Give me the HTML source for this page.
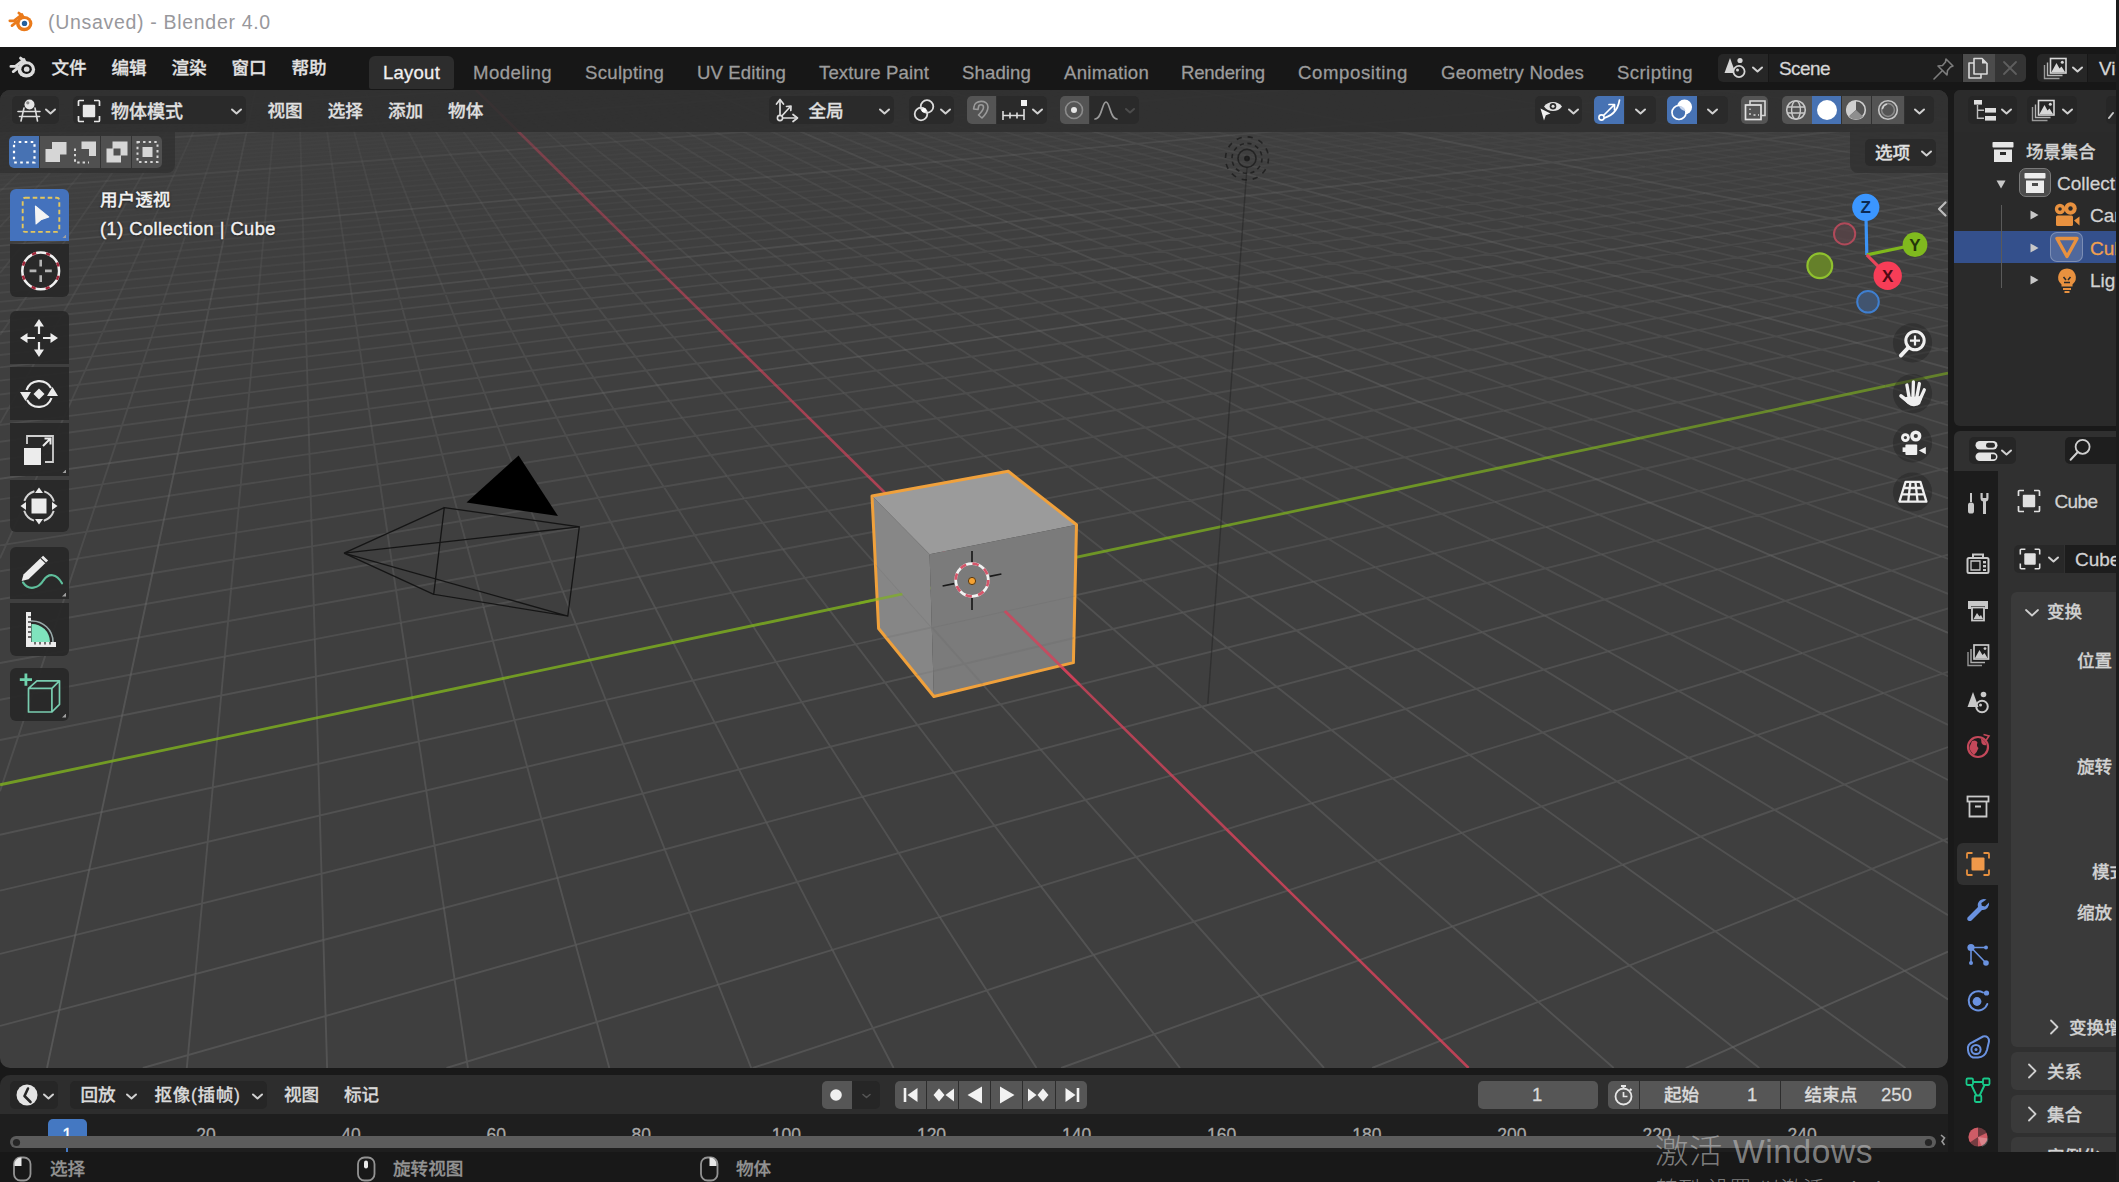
<!DOCTYPE html>
<html lang="zh"><head><meta charset="utf-8"><title>Blender</title>
<style>
*{box-sizing:border-box;margin:0;padding:0}
html,body{width:2119px;height:1182px;overflow:hidden;background:#191919}
body{font-family:"Liberation Sans","Noto Sans CJK SC",sans-serif;color:#e3e3e3;font-size:18px}
#root{position:relative;width:2119px;height:1182px;overflow:hidden;background:#191919}
.a{position:absolute}
.t{position:absolute;white-space:nowrap;line-height:1;transform:translateY(-50%);font-weight:500;-webkit-text-stroke:.28px}
svg{display:block}

</style></head>
<body>
<div id="root">
<svg class="vp" width="1948" height="978" viewBox="0 90 1948 978" style="position:absolute;left:0;top:90px" fill="none" stroke-linecap="butt">
<rect x="0" y="90" width="1948" height="978" fill="#3f3f3f"/>
<g id="grid"><path d="M1607.5 90L1621.4 91.9M1634.4 90L1674.9 95.4M1661.5 90L1730.8 99.1M1688.7 90L1789.2 102.9M1743.4 90L1866.8 105.3M1771 90L1930.7 109.4M1798.6 90L1948 107.8M1826.4 90L1948 104.3M1854.3 90L1948 100.8M1882.3 90L1948 97.4M1910.4 90L1948 94.2M1938.6 90L1948 91M-0 107L20.8 105.8M0 109.4L162.8 99.8M0 111.8L254.1 96.6M0 114.2L387.4 90.9M0 116.7L440 90M-0 121.9L515.9 90M0 124.6L554.2 90M0 127.4L592.7 90M0 130.3L631.5 90M0 133.2L670.5 90M0 136.2L709.8 90M0 139.3L749.4 90M0 142.5L789.2 90M0 145.8L829.2 90M13 151.8L910.2 90M188.3 143.1L951 90M355 134.9L992.1 90M513.8 127.1L1033.5 90M617 123.1L1075.2 90M764.3 115.8L1117.1 90M861.4 112.1L1159.4 90M956.4 108.4L1201.9 90M1049.5 104.8L1244.7 90M1230 97.9L1331.2 90M1317.5 94.5L1374.8 90M1367.7 94.1L1418.8 90M1453.2 90.8L1463.1 90" stroke="#5e5e5e" stroke-opacity="0.03" stroke-width="1.9"/>
<path d="M1165.3 90L1175.1 92M1215.8 90L1236.2 94M1241.2 90L1280.6 97.5M1266.7 90L1326.9 101.1M1292.3 90L1375.2 104.9M1317.9 90L1425.7 108.9M1343.7 90L1478.5 113.1M1369.6 90L1497.5 111.4M1395.6 90L1552.9 115.6M1421.7 90L1611 120.1M1474.3 90L1735.9 129.8M1500.7 90L1754.8 127.8M1527.2 90L1822.1 132.9M1553.9 90L1892.9 138.3M1580.6 90L1948 141.3M1621.4 91.9L1948 136.6M1674.9 95.4L1948 132M1730.8 99.1L1948 127.6M1789.2 102.9L1948 123.4M1866.8 105.3L1948 115.4M1930.7 109.4L1948 111.5M0 152.6L13 151.8M0 156.2L188.3 143.1M0 159.9L355 134.9M0 163.7L513.8 127.1M0 167.6L617 123.1M0 171.7L764.3 115.8M0 175.9L861.4 112.1M0 180.2L956.4 108.4M42.1 181.5L1049.5 104.8M423.7 160.9L1230 97.9M543.1 155.9L1317.5 94.5M713.2 146.8L1367.7 94.1M824.5 142.1L1453.2 90.8M933.2 137.6L1507.7 90M1039.3 133.2L1552.5 90M1142.9 128.9L1597.7 90M1244.2 124.7L1643.2 90M1343.1 120.6L1689.1 90M1496.3 116.1L1781.7 90M1590.4 112.2L1828.5 90M1646.6 111.7L1875.6 90M1738.1 107.9L1923.1 90M1794.1 107.4L1948 92.3M1883.2 103.6L1948 97.1" stroke="#5e5e5e" stroke-opacity="0.07" stroke-width="1.9"/>
<path d="M1.3 90L0 90.8M22.1 90L20.5 91M967.4 90L981.4 93.7M991.8 90L1019.6 97.1M1016.3 90L1059.3 100.7M1040.9 90L1100.8 104.4M1065.6 90L1144.2 108.3M1090.4 90L1189.4 112.3M1115.3 90L1236.8 116.6M1140.3 90L1257.3 114.8M1175.1 92L1307.1 119.2M1236.2 94L1413.9 128.6M1280.6 97.5L1471.3 133.6M1326.9 101.1L1531.7 138.9M1375.2 104.9L1552.6 136.8M1425.7 108.9L1616.3 142.3M1478.5 113.1L1683.4 148.1M1497.5 111.4L1754.2 154.2M1552.9 115.6L1829.1 160.7M1611 120.1L1849.8 158.2M1735.9 129.8L1948 162.1M1754.8 127.8L1948 156.6M1822.1 132.9L1948 151.3M1892.9 138.3L1948 146.2M0 184.7L42.1 181.5M0 194.1L423.7 160.9M0 199L543.1 155.9M0 204.1L713.2 146.8M0 209.4L824.5 142.1M233 195.6L933.2 137.6M435.6 184L1039.3 133.2M565.7 178.3L1142.9 128.9M750.2 167.6L1244.2 124.7M870.7 162.3L1343.1 120.6M1102.5 152.1L1496.3 116.1M1214.1 147.2L1590.4 112.2M1276.9 146.8L1646.6 111.7M1385.1 142L1738.1 107.9M1490.6 137.3L1794.1 107.4M1552.6 136.8L1883.2 103.6M1654.9 132.3L1948 102.2M1754.8 127.8L1948 107.6M1816 127.4L1948 113.3" stroke="#5e5e5e" stroke-opacity="0.10" stroke-width="1.9"/>
<path d="M20.5 91L13.9 95.4M63.8 90L60.2 92.8M84.8 90L83.1 91.5M105.9 90L101.1 94.6M127 90L124 93.3M148.3 90L146.6 92M169.6 90L169.1 90.7M190.9 90L188.7 93.8M212.4 90L211.3 92.5M233.9 90L233.5 91.2M299 90L299.1 91.7M320.9 90L320.9 90.4M386.9 90L387.4 90.9M799.2 90L810.5 94M823 90L844.8 97.4M846.8 90L880.4 100.9M870.8 90L917.6 104.6M894.8 90L956.4 108.4M918.9 90L996.9 112.4M981.4 93.7L1083.6 121M1019.6 97.1L1105.3 119.2M1059.3 100.7L1151.9 123.7M1100.8 104.4L1200.8 128.5M1144.2 108.3L1252.1 133.4M1189.4 112.3L1306 138.6M1236.8 116.6L1362.8 144.1M1257.3 114.8L1422.5 149.9M1307.1 119.2L1445 147.6M1413.9 128.6L1574.9 160M1471.3 133.6L1645.5 166.7M1531.7 138.9L1720.2 173.8M1552.6 136.8L1742.7 171.1M1616.3 142.3L1822.1 178.4M1683.4 148.1L1906.4 186.3M1754.2 154.2L1948 186.6M1829.1 160.7L1948 180.1M1849.8 158.2L1948 173.8M0 215L233 195.6M0 220.7L435.6 184M0 226.6L565.7 178.3M0 232.8L750.2 167.6M302.5 212.5L870.7 162.3M652 193.3L1102.5 152.1M784.8 187.1L1214.1 147.2M913.9 181.2L1276.9 146.8M1039.4 175.4L1385.1 142M1161.4 169.7L1490.6 137.3M1280.1 164.2L1552.6 136.8M1395.7 158.9L1654.9 132.3M1462.6 158.4L1754.8 127.8M1574.4 153.2L1816 127.4M1749.3 147.7L1948 125.4M1854.8 142.7L1948 132M1920.3 142.2L1948 139" stroke="#5e5e5e" stroke-opacity="0.14" stroke-width="1.9"/>
<path d="M13.9 95.4L0 104.6M60.2 92.8L42.2 106.9M83.1 91.5L66.9 105.4M101.1 94.6L91.3 104M124 93.3L115.4 102.6M146.6 92L139.2 101.2M169.1 90.7L166 95.1M681.9 90L685.3 91.6M728.6 90L748.5 98.2M752 90L782 101.8M775.6 90L817 105.4M810.5 94L853.5 109.3M844.8 97.4L891.6 113.3M880.4 100.9L931.4 117.5M917.6 104.6L973.1 121.9M956.4 108.4L1016.7 126.4M996.9 112.4L1062.4 131.3M1083.6 121L1160.9 141.6M1105.3 119.2L1214.1 147.2M1151.9 123.7L1237.5 145M1200.8 128.5L1293.7 150.8M1252.1 133.4L1353 156.9M1306 138.6L1415.5 163.3M1362.8 144.1L1481.8 170.1M1422.5 149.9L1551.9 177.4M1445 147.6L1575.9 174.6M1574.9 160L1729.7 190.1M1645.5 166.7L1814.1 198.6M1720.2 173.8L1837.8 195.5M1742.7 171.1L1927.8 204.4M1822.1 178.4L1948 200.5M1906.4 186.3L1948 193.4M0 239.2L302.5 212.5M60.7 247.4L652 193.3M303.1 232L784.8 187.1M529.1 217.6L913.9 181.2M674 210.6L1039.4 175.4M877.3 197.7L1161.4 169.7M1010.4 191.3L1280.1 164.2M1139.6 185.1L1395.7 158.9M1211.5 184.7L1462.6 158.4M1336.3 178.7L1574.4 153.2M1528.3 172.4L1749.3 147.7M1645.5 166.7L1854.8 142.7M1715.9 166.2L1920.3 142.2M1829.1 160.7L1948 146.4M1899.1 160.2L1948 154.2" stroke="#5e5e5e" stroke-opacity="0.17" stroke-width="1.9"/>
<path d="M42.2 106.9L0 139.8M66.9 105.4L17.3 148M91.3 104L47.3 146M115.4 102.6L76.9 143.9M139.2 101.2L106.1 142M166 95.1L135 140M188.7 93.8L163.4 138.1M211.3 92.5L191.5 136.1M233.5 91.2L219.2 134.3M277.2 90L273.5 130.6M299.1 91.7L300.1 128.8M320.9 90.4L326.4 127M342.8 90L352.4 125.2M364.8 90L378 123.4M387.4 90.9L403.4 121.7M409.1 90L428.4 120M431.4 90L453.1 118.3M453.7 90L477.5 116.7M498.7 90L525.4 113.4M521.3 90L548.9 111.8M543.9 90L572.1 110.2M566.7 90L595.1 108.7M589.6 90L617.8 107.1M612.5 90L640.2 105.6M635.5 90L662.4 104.1M658.7 90L694.9 107.8M685.3 91.6L717.1 106.3M748.5 98.2L787 114.1M782 101.8L824.3 118.3M817 105.4L863.3 122.7M853.5 109.3L904.2 127.3M891.6 113.3L947.1 132.1M931.4 117.5L992.1 137.2M973.1 121.9L1039.3 142.5M1016.7 126.4L1089.1 148.1M1062.4 131.3L1141.4 154M1160.9 141.6L1221.5 157.8M1214.1 147.2L1280.1 164.2M1237.5 145L1342.1 171M1293.7 150.8L1407.8 178.2M1353 156.9L1477.5 185.9M1415.5 163.3L1502.7 183M1481.8 170.1L1577 191M1551.9 177.4L1656 199.5M1575.9 174.6L1740.4 208.5M1729.7 190.1L1855.5 214.6M1814.1 198.6L1948 224M1837.8 195.5L1948 215.8M1927.8 204.4L1948 208M0 252.9L60.7 247.4M0 260.2L303.1 232M0 267.8L529.1 217.6M220.5 254.5L674 210.6M463.8 238.4L877.3 197.7M690.2 223.4L1010.4 191.3M836.3 216.2L1139.6 185.1M977.9 209.1L1211.5 184.7M1115.2 202.3L1336.3 178.7M1323.6 195.3L1528.3 172.4M1451.9 188.8L1645.5 166.7M1576.4 182.6L1715.9 166.2M1650.5 182.1L1829.1 160.7M1770.6 176.1L1899.1 160.2M1844.2 175.6L1948 162.5" stroke="#5e5e5e" stroke-opacity="0.21" stroke-width="1.9"/>
<path d="M17.3 148L0 162.9M47.3 146L0 191.2M76.9 143.9L27.9 196.8M106.1 142L64 193.9M135 140L106.5 181.1M163.4 138.1L140.2 178.5M191.5 136.1L173.4 175.9M219.2 134.3L206.1 173.4M273.5 130.6L270 168.5M300.1 128.8L301.2 166.1M326.4 127L331.9 163.7M352.4 125.2L362.2 161.4M378 123.4L392.1 159.1M403.4 121.7L421.5 156.8M428.4 120L450.5 154.5M453.1 118.3L479.1 152.3M477.5 116.7L507.3 150.2M525.4 113.4L562.4 145.9M548.9 111.8L599.1 151.5M572.1 110.2L626.5 149.3M595.1 108.7L653.6 147.2M617.8 107.1L680.2 145.1M640.2 105.6L706.5 143M662.4 104.1L732.4 140.9M694.9 107.8L758 138.9M717.1 106.3L783.2 136.9M787 114.1L849.7 140.1M824.3 118.3L874.6 138M863.3 122.7L899.1 136M904.2 127.3L943.5 141.3M947.1 132.1L990.2 146.8M992.1 137.2L1039.3 152.5M1039.3 142.5L1091.2 158.6M1089.1 148.1L1145.9 165.1M1141.4 154L1203.8 171.9M1221.5 157.8L1291.2 176.3M1280.1 164.2L1356.4 183.8M1342.1 171L1425.8 191.8M1407.8 178.2L1499.6 200.3M1477.5 185.9L1578.2 209.3M1502.7 183L1604.7 206M1577 191L1688.8 215.4M1656 199.5L1778.9 225.6M1740.4 208.5L1875.6 236.4M1855.5 214.6L1948 232.7M0 275.7L220.5 254.5M0 284.1L463.8 238.4M216.9 271L690.2 223.4M471.6 253.5L836.3 216.2M707.8 237.4L977.9 209.1M860.1 229.6L1115.2 202.3M1150 214.7L1323.6 195.3M1288.1 207.6L1451.9 188.8M1366.6 207.2L1576.4 182.6M1499.6 200.3L1650.5 182.1M1577.6 199.9L1770.6 176.1M1705.6 193.2L1844.2 175.6M1829.7 186.7L1948 171.3M1906.4 186.3L1948 180.7" stroke="#5e5e5e" stroke-opacity="0.24" stroke-width="1.9"/>
<path d="M27.9 196.8L0 226.8M64 193.9L23.6 243.8M106.5 181.1L65.7 240M140.2 178.5L107.1 236.3M173.4 175.9L147.7 232.7M206.1 173.4L187.5 229.1M270 168.5L266.2 209.7M301.2 166.1L302.4 206.5M331.9 163.7L337.9 203.4M362.2 161.4L372.9 200.4M392.1 159.1L407.2 197.4M421.5 156.8L441 194.5M450.5 154.5L474.3 191.6M479.1 152.3L515.3 199.6M507.3 150.2L548.6 196.6M562.4 145.9L613.6 190.8M599.1 151.5L645.3 188M626.5 149.3L676.4 185.2M653.6 147.2L707.1 182.4M680.2 145.1L737.2 179.7M706.5 143L766.9 177M732.4 140.9L796.1 174.4M758 138.9L844.6 181.6M783.2 136.9L873.8 178.9M849.7 140.1L930.8 173.6M874.6 138L958.6 171M899.1 136L1011.7 178M943.5 141.3L1039.4 175.4M990.2 146.8L1066.7 172.7M1039.3 152.5L1093.5 170.1M1091.2 158.6L1150.8 177.2M1145.9 165.1L1211.5 184.7M1203.8 171.9L1276 192.6M1291.2 176.3L1372.2 197.9M1356.4 183.8L1445.6 206.8M1425.8 191.8L1523.9 216.2M1499.6 200.3L1607.7 226.3M1578.2 209.3L1635.3 222.6M1604.7 206L1725.3 233.2M1688.8 215.4L1822 244.6M1778.9 225.6L1926.2 256.8M1875.6 236.4L1948 251.3M0 292.8L216.9 271M24.7 299.4L471.6 253.5M304.4 279.6L707.8 237.4M562.5 261.4L860.1 229.6M955.9 236.4L1150 214.7M1105.3 228.5L1288.1 207.6M1187.9 228.1L1366.6 207.2M1331.4 220.5L1499.6 200.3M1470.2 213.1L1577.6 199.9M1551.3 212.7L1705.6 193.2M1684.8 205.6L1829.7 186.7M1765.4 205.2L1906.4 186.3M1846.4 204.8L1948 190.7M1915.3 217.8L1948 213" stroke="#5e5e5e" stroke-opacity="0.28" stroke-width="1.9"/>
<path d="M23.6 243.8L0 272.9M65.7 240L31.4 289.6M107.1 236.3L79.3 284.8M147.7 232.7L126.2 280.1M187.5 229.1L172 275.5M266.2 209.7L260.9 266.6M302.4 206.5L304 262.2M337.9 203.4L346.1 258M372.9 200.4L387.4 253.9M407.2 197.4L427.9 249.8M441 194.5L467.6 245.8M474.3 191.6L506.5 241.9M515.3 199.6L544.7 238.1M548.6 196.6L582.1 234.3M613.6 190.8L654.8 227M645.3 188L690.2 223.4M676.4 185.2L724.9 220M707.1 182.4L779.2 229.9M737.2 179.7L813.9 226.3M766.9 177L848 222.7M796.1 174.4L881.4 219.2M844.6 181.6L914.1 215.8M873.8 178.9L946.3 212.4M930.8 173.6L1039.5 218.5M958.6 171L1071 215M1011.7 178L1101.9 211.7M1039.4 175.4L1168.5 221.3M1066.7 172.7L1199.3 217.7M1093.5 170.1L1229.4 214.3M1150.8 177.2L1301.4 224.1M1211.5 184.7L1331.4 220.5M1276 192.6L1408.8 230.8M1372.2 197.9L1467.5 223.4M1445.6 206.8L1551 233.9M1523.9 216.2L1640.7 245.2M1607.7 226.3L1669.5 241.1M1635.3 222.6L1766.1 253.1M1725.3 233.2L1870.4 265.9M1822 244.6L1898.6 261.3M1926.2 256.8L1948 261.4M0 301.9L24.7 299.4M0 311.5L304.4 279.6M211 299L562.5 261.4M658.4 269.6L955.9 236.4M899.9 252L1105.3 228.5M1056.7 243.5L1187.9 228.1M1208.1 235.3L1331.4 220.5M1293.1 235L1470.2 213.1M1438.4 227L1551.3 212.7M1522.9 226.7L1684.8 205.6M1551 233.9L1765.4 205.2M1580.4 241.5L1846.4 204.8M1702.6 249.1L1915.3 217.8M1794.4 248.8L1948 225.4M1831.5 257.1L1948 238.8M1870.4 265.9L1948 253.3" stroke="#5e5e5e" stroke-opacity="0.31" stroke-width="1.9"/>
<path d="M31.4 289.6L0 335M79.3 284.8L41.9 350.2M126.2 280.1L97.3 343.9M172 275.5L151.3 337.7M260.9 266.6L255.4 325.8M304 262.2L305.6 320M346.1 258L354.6 314.4M387.4 253.9L402.5 308.9M427.9 249.8L449.2 303.6M467.6 245.8L494.9 298.4M506.5 241.9L539.5 293.2M544.7 238.1L583.1 288.3M582.1 234.3L625.8 283.4M654.8 227L708.3 273.9M690.2 223.4L748.3 269.3M724.9 220L787.4 264.9M779.2 229.9L852.4 278.1M813.9 226.3L891.5 273.4M848 222.7L929.7 268.8M881.4 219.2L967.1 264.3M914.1 215.8L1003.7 259.9M946.3 212.4L1076.8 272.9M1039.5 218.5L1148.9 263.7M1071 215L1183.8 259.3M1101.9 211.7L1264.5 272.3M1168.5 221.3L1299.1 267.7M1199.3 217.7L1386.8 281.4M1229.4 214.3L1421 276.5M1301.4 224.1L1516.4 291M1331.4 220.5L1550.1 285.9M1408.8 230.8L1654 301.3M1467.5 223.4L1800.3 312.1M1551 233.9L1924 329.9M1640.7 245.2L1948 321.7M1669.5 241.1L1948 308.1M1766.1 253.1L1948 295.4M1870.4 265.9L1948 283.4M1898.6 261.3L1948 272.1M0 321.5L211 299M0 343.2L658.4 269.6M-0 355L97.3 343.9M667.5 278.6L899.9 252M838.7 269.1L1056.7 243.5M929.7 268.8L1208.1 235.3M1021.2 268.5L1293.1 235M1113.3 268.2L1438.4 227M1205.9 268L1522.9 226.7M1299.1 267.7L1551 233.9M1324.8 276.8L1580.4 241.5M1450.6 286.1L1702.6 249.1M1550.1 285.9L1794.4 248.8M1584.1 296.1L1831.5 257.1M1687.1 295.8L1870.4 265.9M1726 306.6L1948 269M1832.7 306.4L1948 286.1M1877 317.8L1948 304.8M1924 329.9L1948 325.3" stroke="#5e5e5e" stroke-opacity="0.34" stroke-width="1.9"/>
<path d="M41.9 350.2L0 423.3M97.3 343.9L71.7 400.2M151.3 337.7L133 392.4M255.4 325.8L250.6 377.5M305.6 320L307.1 370.4M354.6 314.4L362 363.4M402.5 308.9L415.5 356.6M449.2 303.6L467.5 350M494.9 298.4L518.3 343.6M539.5 293.2L567.8 337.3M583.1 288.3L616 331.2M625.8 283.4L663.1 325.3M708.3 273.9L780.5 337.2M748.3 269.3L826.4 331M787.4 264.9L871.1 325M852.4 278.1L914.8 319.2M891.5 273.4L957.4 313.5M929.7 268.8L1039.7 330.8M967.1 264.3L1082.1 324.8M1003.7 259.9L1123.5 318.9M1076.8 272.9L1163.8 313.1M1148.9 263.7L1296.1 324.5M1183.8 259.3L1397.6 343.1M1264.5 272.3L1437 336.7M1299.1 267.7L1475.5 330.4M1386.8 281.4L1587.7 349.6M1421 276.5L1711.3 370.8M1516.4 291L1749.2 363.5M1550.1 285.9L1885.7 386.2M1654 301.3L1948 385.8M1800.3 312.1L1948 351.5M1924 329.9L1948 336.1M97.3 343.9L667.5 278.6M0 367.4L838.7 269.1M0 380.6L929.7 268.8M0 394.5L1021.2 268.5M0 409.3L1113.3 268.2M0 425L64.3 416.6M720.8 331.1L1205.9 268M914.8 319.2L1299.1 267.7M1018.8 319L1324.8 276.8M1228.9 318.7L1450.6 286.1M1256.1 330.6L1550.1 285.9M1365.4 330.5L1584.1 296.1M1475.5 330.4L1687.1 295.8M1511.1 343L1726 306.6M1548.9 356.5L1832.7 306.4M1667.1 356.4L1877 317.8M1711.3 370.8L1924 329.9M1834.3 370.8L1948 348M1940.7 402.7L1948 401.1" stroke="#5e5e5e" stroke-opacity="0.38" stroke-width="1.9"/>
<path d="M71.7 400.2L17.9 518.8M133 392.4L94.8 507.1M250.6 377.5L244.5 444M307.1 370.4L308.9 434.9M362 363.4L371.4 426M415.5 356.6L432 417.3M467.5 350L490.8 409M518.3 343.6L547.9 400.8M567.8 337.3L603.4 392.9M616 331.2L682.3 417.8M663.1 325.3L737.9 409.4M780.5 337.2L844.3 393.2M826.4 331L895.3 385.4M871.1 325L944.8 377.9M914.8 319.2L1039.8 401.5M957.4 313.5L1089.1 393.4M1039.7 330.8L1136.9 385.6M1082.1 324.8L1183.4 378M1123.5 318.9L1291.9 401.8M1163.8 313.1L1337.9 393.7M1296.1 324.5L1504.3 410.6M1397.6 343.1L1640 438.2M1437 336.7L1684.2 428.8M1475.5 330.4L1836.5 458.7M1587.7 349.6L1948 471.9M1711.3 370.8L1948 447.7M1749.2 363.5L1948 425.4M1885.7 386.2L1948 404.8M64.3 416.6L720.8 331.1M0 441.8L914.8 319.2M0 459.7L1018.8 319M-0 499.4L173.7 473.9M669.4 401L1228.9 318.7M895.3 385.4L1256.1 330.6M1015.6 385.5L1365.4 330.5M1136.9 385.6L1475.5 330.4M1259.2 385.7L1511.1 343M1291.9 401.8L1548.9 356.5M1419.5 402L1667.1 356.4M1459.1 419.3L1711.3 370.8M1592.5 419.5L1834.3 370.8M1779.8 438.5L1940.7 402.7M1836.5 458.7L1948 432.4M1897.7 480.4L1948 467.9" stroke="#5e5e5e" stroke-opacity="0.41" stroke-width="1.9"/>
<path d="M17.9 518.8L0 558.3M94.8 507.1L77.6 558.5M244.5 444L236.3 532.6M308.9 434.9L311.4 520.4M371.4 426L383.8 508.5M432 417.3L453.7 497.1M490.8 409L521.3 486.1M547.9 400.8L586.6 475.4M603.4 392.9L649.8 465.1M682.3 417.8L744 498.4M737.9 409.4L807.3 487.3M844.3 393.2L927.4 466.1M895.3 385.4L984.6 456M944.8 377.9L1098.8 488.5M1039.8 401.5L1155.5 477.6M1089.1 393.4L1210.3 467.1M1136.9 385.6L1341.9 501.2M1183.4 378L1395.9 489.8M1291.9 401.8L1448.1 478.7M1337.9 393.7L1598.9 514.6M1504.3 410.6L1821.8 541.8M1640 438.2L1871 528.7M1684.2 428.8L1918.4 516.1M1836.5 458.7L1948 498.3M173.7 473.9L669.4 401M0 521.5L895.3 385.4M0 545.4L1015.6 385.5M0 571.2L1136.9 385.6M726.8 476L1259.2 385.7M868.4 476.5L1291.9 401.8M1011.2 477.1L1419.5 402M1155.5 477.6L1459.1 419.3M1301.1 478.2L1592.5 419.5M1495.1 501.9L1779.8 438.5M1649.9 502.6L1836.5 458.7M1707.7 527.8L1897.7 480.4M1871 528.7L1948 508.3" stroke="#5e5e5e" stroke-opacity="0.45" stroke-width="1.9"/>
<path d="M236.3 532.6L231.1 588.9M311.4 520.4L312.9 574.5M383.8 508.5L391.6 560.6M453.7 497.1L467.4 547.2M521.3 486.1L540.4 534.4M586.6 475.4L639.1 576.8M649.8 465.1L712.4 562.8M744 498.4L782.9 549.2M807.3 487.3L850.8 536.2M927.4 466.1L1040.2 565M984.6 456L1105.1 551.2M1098.8 488.5L1167.7 538M1155.5 477.6L1227.9 525.3M1210.3 467.1L1375.1 567.2M1341.9 501.2L1434.3 553.3M1395.9 489.8L1491.3 539.9M1448.1 478.7L1546.1 527M1598.9 514.6L1717.6 569.5M152.5 573.3L726.8 476M312.9 574.5L868.4 476.5M624.3 548.2L1011.2 477.1M782.9 549.2L1155.5 477.6M943.1 550.2L1301.1 478.2M1268.8 552.2L1495.1 501.9M1434.3 553.3L1649.9 502.6M1601.6 554.3L1707.7 527.8" stroke="#5e5e5e" stroke-opacity="0.48" stroke-width="1.9"/>
<path d="M77.6 558.5L57.3 619.6M1871 528.7L1948 558.9M1918.4 516.1L1948 527.2M0 599.2L152.5 573.3M1770.7 555.4L1871 528.7M1941.7 556.4L1948 554.7" stroke="#616161" stroke-opacity="0.45" stroke-width="1.9"/>
<path d="M57.3 619.6L2.3 784.3M231.1 588.9L224.8 656.5M312.9 574.5L314.8 639.2M391.6 560.6L400.9 622.6M467.4 547.2L483.6 606.7M540.4 534.4L562.9 591.5M712.4 562.8L752.8 625.7M782.9 549.2L829.1 609.6M850.8 536.2L902.3 594.1M1105.1 551.2L1182.7 612.5M1167.7 538L1249.5 596.8M1227.9 525.3L1313.6 581.7M1375.1 567.2L1482 632.1M1434.3 553.3L1544.6 615.5M1491.3 539.9L1741.8 671.6M1546.1 527L1948 724.9M1717.6 569.5L1948 676.2M1821.8 541.8L1948 593.9M0 629.7L312.9 574.5M0 663L624.3 548.2M0 699.7L782.9 549.2M0 740L122.1 715.5M655.3 608.1L943.1 550.2M1142.1 580.5L1268.8 552.2M1313.6 581.7L1434.3 553.3M1362.6 614L1601.6 554.3M1544.6 615.5L1770.7 555.4M1608.2 651.3L1941.7 556.4M1802.2 653.1L1948 608.5M1883.5 693.1L1948 671.8" stroke="#616161" stroke-opacity="0.48" stroke-width="1.9"/>
<path d="M2.3 784.3L0 791.2M224.8 656.5L195.5 974M314.8 639.2L323.4 940M400.9 622.6L443.9 908M483.6 606.7L557.4 877.8M562.9 591.5L664.8 849.3M639.1 576.8L766.3 822.3M752.8 625.7L862.5 796.7M829.1 609.6L953.8 772.5M902.3 594.1L1040.5 749.4M1040.2 565L1311.8 803.2M1182.7 612.5L1540 894.7M1249.5 596.8L1622.7 864.8M1313.6 581.7L1904.6 970.8M1482 632.1L1948 915.2M1544.6 615.5L1948 842.8M1741.8 671.6L1948 780M122.1 715.5L655.3 608.1M0 834.7L1142.1 580.5M0 890.7L1313.6 581.7M75.3 935.1L1362.6 614M766.3 822.3L1544.6 615.5M1171.7 775.4L1608.2 651.3M1226.4 829.3L1802.2 653.1M1461.7 832.9L1883.5 693.1M1540 894.7L1948 747.1M1795.8 899.2L1948 838.5" stroke="#616161" stroke-opacity="0.52" stroke-width="1.9"/>
<path d="M664.8 849.3L718.3 984.8M766.3 822.3L832.4 949.9M862.5 796.7L939.7 917.1M953.8 772.5L1040.8 886.1M1040.5 749.4L1260 996M1311.8 803.2L1452.3 926.5M323.4 940L766.3 822.3M575.7 944.9L1171.7 775.4M832.4 949.9L1226.4 829.3M1093.5 955L1461.7 832.9" stroke="#616161" stroke-opacity="0.55" stroke-width="1.9"/>
<path d="M0 953.9L75.3 935.1M0 1025.9L59.3 1010.2" stroke="#646464" stroke-opacity="0.52" stroke-width="1.9"/>
<path d="M195.5 974L186.8 1068M323.4 940L327.1 1068M443.9 908L467.9 1068M557.4 877.8L609.3 1068M718.3 984.8L751.2 1068M832.4 949.9L893.6 1068M939.7 917.1L1036.5 1068M1040.8 886.1L1180 1068M1260 996L1324 1068M1452.3 926.5L1613.7 1068M1540 894.7L1759.3 1068M1622.7 864.8L1905.5 1068M1904.6 970.8L1948 999.4M59.3 1010.2L323.4 940M142.8 1068L575.7 944.9M446.5 1068L832.4 949.9M752.6 1068L1093.5 955M1061.1 1068L1540 894.7M1372.1 1068L1795.8 899.2" stroke="#646464" stroke-opacity="0.55" stroke-width="1.9"/>
<path d="M42.9 90L37.2 94.1M37.2 94.1L110.1 90" stroke="#676767" stroke-opacity="0.17" stroke-width="1.9"/>
<path d="M37.2 94.1L17.3 108.4M0 96.2L37.2 94.1" stroke="#6a6a6a" stroke-opacity="0.17" stroke-width="1.9"/>
<path d="M17.3 108.4L0 120.7M255.5 90L246.5 132.4M705.2 90L739 104.8M943.1 90L961.6 95.1M1190.5 90L1217.5 95.4M1447.9 90L1517.9 100.9M1716 90L1948 119.3M0 119.3L477.8 90M0 149.2L76.9 143.9M548.9 111.8L869.6 90M1217.5 95.4L1287.8 90M1589 103.1L1735.2 90M1912.9 123L1948 119.2" stroke="#6a6a6a" stroke-opacity="0.21" stroke-width="1.9"/>
<path d="M246.5 132.4L238.3 170.9M739 104.8L808.1 134.9M961.6 95.1L1110.5 136.3M1217.5 95.4L1428.8 137.7M1517.9 100.9L1929 164.9M76.9 143.9L548.9 111.8M0 189.3L1217.5 95.4M1229.8 135.4L1589 103.1M1683.4 148.1L1912.9 123" stroke="#6a6a6a" stroke-opacity="0.24" stroke-width="1.9"/>
<path d="M238.3 170.9L229.3 212.9M808.1 134.9L902.5 176.2M1110.5 136.3L1265.1 179.1M1428.8 137.7L1705.6 193.2M1929 164.9L1948 167.8M707.1 182.4L1229.8 135.4M1407.8 178.2L1683.4 148.1M1880.1 211.2L1948 201.5" stroke="#6a6a6a" stroke-opacity="0.28" stroke-width="1.9"/>
<path d="M229.3 212.9L216.9 271M902.5 176.2L1007.4 222M1265.1 179.1L1438.4 227M1705.6 193.2L1948 241.8M0 245.9L707.1 182.4M1071 215L1407.8 178.2M1669.5 241.1L1880.1 211.2" stroke="#6a6a6a" stroke-opacity="0.31" stroke-width="1.9"/>
<path d="M216.9 271L204 331.6M1007.4 222L1113.3 268.2M1438.4 227L1687.1 295.8M0 332.1L1071 215M1421 276.5L1669.5 241.1" stroke="#6a6a6a" stroke-opacity="0.34" stroke-width="1.9"/>
<path d="M204 331.6L192.6 384.9M1113.3 268.2L1256.1 330.6M1687.1 295.8L1948 368M1123.5 318.9L1421 276.5" stroke="#6a6a6a" stroke-opacity="0.38" stroke-width="1.9"/>
<path d="M192.6 384.9L178 453.5M1256.1 330.6L1459.1 419.3M0 478.8L1123.5 318.9" stroke="#6a6a6a" stroke-opacity="0.41" stroke-width="1.9"/>
<path d="M178 453.5L158.4 545.3M1459.1 419.3L1770.7 555.4" stroke="#6a6a6a" stroke-opacity="0.45" stroke-width="1.9"/>
<path d="M158.4 545.3L112.4 761M1770.7 555.4L1948 632.8" stroke="#6a6a6a" stroke-opacity="0.48" stroke-width="1.9"/>
<path d="M112.4 761L59.3 1010.2M1904.6 970.8L1948 951.6" stroke="#6a6a6a" stroke-opacity="0.52" stroke-width="1.9"/>
<path d="M59.3 1010.2L47 1068M1685.7 1068L1904.6 970.8" stroke="#6a6a6a" stroke-opacity="0.55" stroke-width="1.9"/>
<path d="M476.1 90L501.6 115" stroke="#d2435b" stroke-opacity="0.32" stroke-width="2.6"/>
<path d="M501.6 115L535 148" stroke="#d2435b" stroke-opacity="0.37" stroke-width="2.6"/>
<path d="M535 148L581.4 193.7" stroke="#d2435b" stroke-opacity="0.42" stroke-width="2.6"/>
<path d="M581.4 193.7L618.8 230.6" stroke="#d2435b" stroke-opacity="0.48" stroke-width="2.6"/>
<path d="M618.8 230.6L667.5 278.6" stroke="#d2435b" stroke-opacity="0.53" stroke-width="2.6"/>
<path d="M667.5 278.6L733.4 343.5" stroke="#d2435b" stroke-opacity="0.58" stroke-width="2.6"/>
<path d="M733.4 343.5L791.9 401.1" stroke="#d2435b" stroke-opacity="0.64" stroke-width="2.6"/>
<path d="M791.9 401.1L868.4 476.5" stroke="#d2435b" stroke-opacity="0.69" stroke-width="2.6"/>
<path d="M868.4 476.5L972.6 579.2" stroke="#d2435b" stroke-opacity="0.74" stroke-width="2.6"/>
<path d="M972.6 579.2L1226.4 829.3" stroke="#d2435b" stroke-opacity="0.80" stroke-width="2.6"/>
<path d="M1226.4 829.3L1468.6 1068" stroke="#d2435b" stroke-opacity="0.85" stroke-width="2.6"/>
<path d="M1885.7 386.2L1948 373.1" stroke="#7fb31e" stroke-opacity="0.58" stroke-width="2.8"/>
<path d="M1640 438.2L1885.7 386.2" stroke="#7fb31e" stroke-opacity="0.64" stroke-width="2.8"/>
<path d="M1448.1 478.7L1640 438.2" stroke="#7fb31e" stroke-opacity="0.69" stroke-width="2.8"/>
<path d="M972.6 579.2L1448.1 478.7" stroke="#7fb31e" stroke-opacity="0.74" stroke-width="2.8"/>
<path d="M0 784.8L972.6 579.2" stroke="#7fb31e" stroke-opacity="0.80" stroke-width="2.8"/></g>
<path d="M344 553.1L444.3 507.6M344 553.1L579.3 526.8M344 553.1L567.8 616.1M344 553.1L433.7 594.3M444.3 507.6L579.3 526.8L567.8 616.1L433.7 594.3Z" stroke="#111" stroke-width="1.3" stroke-opacity=".9"/>
<polygon points="466.5,502.5 558,516.1 518.6,455.4" fill="#000"/>
<path d="M1247 167.4L1207.8 703.8" stroke="#1c1c1c" stroke-opacity=".4" stroke-width="1.4"/>
<g stroke="#1a1a1a" stroke-opacity=".75" stroke-width="1.6"><circle cx="1247" cy="158.4" r="9"/><circle cx="1247" cy="158.4" r="15" stroke-dasharray="4.2 3.65"/><circle cx="1247" cy="158.4" r="21.5" stroke-dasharray="5.2 6.06"/><circle cx="1247" cy="158.4" r="2.2" fill="#222"/></g>
<polygon points="872,496 1008.2,471.2 1076.5,524.7 929.6,554.3" fill="#9b9b9b"/>
<polygon points="872,496 929.6,554.3 933.9,696.5 878.6,628.5" fill="#878787"/>
<polygon points="929.6,554.3 1076.5,524.7 1073.4,662.6 933.9,696.5" fill="#7b7b7b"/>
<polygon points="872,496 1008.2,471.2 1076.5,524.7 1073.4,662.6 933.9,696.5 878.6,628.5" stroke="#f0a13c" stroke-width="3" stroke-linejoin="round"/>
<clipPath id="lowc"><polygon points="875.4,563.9 931.8,627.3 1074.9,595.4 1073.4,662.6 933.9,696.5 878.6,628.5"/></clipPath>
<g clip-path="url(#lowc)" opacity=".38"><use href="#grid"/></g>
<path d="M1004.8 611L1079.5 684.6" stroke="#d9405a" stroke-opacity=".68" stroke-width="2.8"/>
<path d="M902.3 594.1L858.7 603.3" stroke="#7fb31e" stroke-opacity=".55" stroke-width="2.6"/>
<g><path d="M972 551v12M972 598v12" stroke="#1a1a1a" stroke-width="1.7"/><path d="M942 580h12M990 580h12" stroke="#1a1a1a" stroke-width="1.7" transform="rotate(-11.5 972 580)"/>
<circle cx="972" cy="580" r="16.3" stroke="#f2f2f2" stroke-width="2.7"/><circle cx="972" cy="580" r="16.3" stroke="#d4566a" stroke-width="2.7" stroke-dasharray="6.4 6.4"/>
<circle cx="972" cy="581" r="3.6" fill="#f5a233" stroke="#5a3a10" stroke-width="1"/></g>
</svg>
<div class="a" style="left:0px;top:0px;width:2119px;height:47px;background:#ffffff;"></div>
<svg class="a" style="left:8.2px;top:11px;" width="28" height="24" viewBox="0 0 28 24" fill="none"><path d="M14 3.5 L6 9.8 L1.8 9.8 M4 14.6 L9 10.8" stroke="#ea7a1a" stroke-width="2.7" stroke-linecap="round" stroke-linejoin="round"/><path d="M10.8 2 L15 5.4" stroke="#ea7a1a" stroke-width="2.7" stroke-linecap="round"/><ellipse cx="16.2" cy="12.6" rx="8.2" ry="7.6" fill="#ea7a1a"/><ellipse cx="16.4" cy="12.4" rx="4.8" ry="4.4" fill="#fff"/><ellipse cx="16.5" cy="12.4" rx="2.7" ry="2.6" fill="#26609c"/></svg>
<span class="t" style="left:48px;top:22.5px;font-size:19.5px;color:#98989c;letter-spacing:0.69px;-webkit-text-stroke:0">(Unsaved) - Blender 4.0</span>
<div class="a" style="left:0px;top:47px;width:2116px;height:43px;background:#171717;"></div>
<svg class="a" style="left:8.5px;top:54.5px;" width="30" height="27.5" viewBox="0 0 28 24" fill="none"><path d="M14 3.5 L6 9.8 L1.8 9.8 M4 14.6 L9 10.8" stroke="#dcdcdc" stroke-width="2.7" stroke-linecap="round" stroke-linejoin="round"/><path d="M10.8 2 L15 5.4" stroke="#dcdcdc" stroke-width="2.7" stroke-linecap="round"/><ellipse cx="16.2" cy="12.6" rx="8.2" ry="7.6" fill="#dcdcdc"/><ellipse cx="16.4" cy="12.4" rx="4.9" ry="4.5" fill="#171717"/><ellipse cx="16.5" cy="12.4" rx="2.6" ry="2.5" fill="#dcdcdc"/></svg>
<span class="t " style="left:51.5px;top:68.6px;font-size:17.6px;color:#e2e2e2;">文件</span>
<span class="t " style="left:111.5px;top:68.6px;font-size:17.6px;color:#e2e2e2;">编辑</span>
<span class="t " style="left:171.5px;top:68.6px;font-size:17.6px;color:#e2e2e2;">渲染</span>
<span class="t " style="left:231.5px;top:68.6px;font-size:17.6px;color:#e2e2e2;">窗口</span>
<span class="t " style="left:291.5px;top:68.6px;font-size:17.6px;color:#e2e2e2;">帮助</span>
<div class="a" style="left:369px;top:56px;width:85px;height:32.5px;background:#2d2d2d;border-radius:6px 6px 2px 2px;"></div>
<span class="t" style="left:383px;top:73px;font-size:18.6px;color:#f0f0f0;letter-spacing:0.2px;">Layout</span>
<span class="t" style="left:473px;top:73px;font-size:18.6px;color:#9c9c9c;letter-spacing:0.44px;">Modeling</span>
<span class="t" style="left:585px;top:73px;font-size:18.6px;color:#9c9c9c;letter-spacing:0.28px;">Sculpting</span>
<span class="t" style="left:697px;top:73px;font-size:18.6px;color:#9c9c9c;letter-spacing:0.11px;">UV Editing</span>
<span class="t" style="left:819px;top:73px;font-size:18.6px;color:#9c9c9c;letter-spacing:0.11px;">Texture Paint</span>
<span class="t" style="left:962px;top:73px;font-size:18.6px;color:#9c9c9c;letter-spacing:0.11px;">Shading</span>
<span class="t" style="left:1064px;top:73px;font-size:18.6px;color:#9c9c9c;letter-spacing:0.26px;">Animation</span>
<span class="t" style="left:1181px;top:73px;font-size:18.6px;color:#9c9c9c;letter-spacing:-0.2px;">Rendering</span>
<span class="t" style="left:1298px;top:73px;font-size:18.6px;color:#9c9c9c;letter-spacing:0.6px;">Compositing</span>
<span class="t" style="left:1441px;top:73px;font-size:18.6px;color:#9c9c9c;letter-spacing:0.18px;">Geometry Nodes</span>
<span class="t" style="left:1617px;top:73px;font-size:18.6px;color:#9c9c9c;letter-spacing:0.41px;">Scripting</span>
<div class="a" style="left:1690px;top:47px;width:26px;height:43px;background:linear-gradient(90deg,rgba(23,23,23,0),#171717 70%);"></div>
<div class="a" style="left:1718px;top:54px;width:50px;height:28px;background:#262626;border-radius:5px 0 0 5px;"></div>
<div class="a" style="left:1768.5px;top:54px;width:193.5px;height:28px;background:#1e1e1e;"></div>
<div class="a" style="left:1962.5px;top:54px;width:32.0px;height:28px;background:#4b4b4b;"></div>
<div class="a" style="left:1995px;top:54px;width:31px;height:28px;background:#343434;border-radius:0 5px 5px 0;"></div>
<span class="t" style="left:1779px;top:67.5px;font-size:19px;color:#d6d6d6;letter-spacing:-0.57px;">Scene</span>
<svg class="a" style="left:1722px;top:55px;" width="28" height="26" viewBox="0 0 28 26" fill="none"><path d="M8 3 L13.5 18 L2.5 18 Z" fill="#d5d5d5"/><circle cx="18" cy="5.5" r="2.6" fill="#d5d5d5"/><circle cx="17" cy="16.5" r="5.6" fill="#262626" stroke="#d5d5d5" stroke-width="1.8"/><circle cx="15.5" cy="15" r="1.5" fill="#d5d5d5"/></svg>
<svg class="a" style="left:1750.5px;top:62.5px;" width="13.0" height="13.0" viewBox="0 0 13.0 13.0" fill="none"><path d="M2 4.5 l4.5 4.0 l4.5 -4.0" stroke="#d0d0d0" stroke-width="2" stroke-linecap="round" stroke-linejoin="round"/></svg>
<svg class="a" style="left:1931px;top:56px;" width="26" height="26" viewBox="0 0 26 26" fill="none"><path d="M15 3 L22 10 L19.5 11 L16.5 14.5 L16 19 L7 10 L11.5 9.5 L14.5 6 Z" stroke="#7d7d7d" stroke-width="1.6" stroke-linejoin="round"/><path d="M11.5 14.5 L3 23" stroke="#7d7d7d" stroke-width="1.6" stroke-linecap="round"/></svg>
<svg class="a" style="left:1965px;top:56px;" width="26" height="26" viewBox="0 0 26 26" fill="none"><path d="M9 2.5 h8 l5 5 v10.5 h-13 z" fill="#4b4b4b" stroke="#dadada" stroke-width="1.6" stroke-linejoin="round"/><path d="M17 2.5 v5 h5 z" fill="#dadada"/><path d="M9 7 h-5 v15 h12 v-4" stroke="#dadada" stroke-width="1.6" stroke-linejoin="round"/></svg>
<svg class="a" style="left:2000px;top:58px;" width="20" height="20" viewBox="0 0 20 20" fill="none"><path d="M4 4 L16 16 M16 4 L4 16" stroke="#5e5e5e" stroke-width="1.8" stroke-linecap="round"/></svg>
<div class="a" style="left:2037px;top:54px;width:50px;height:28px;background:#262626;border-radius:5px 0 0 5px;"></div>
<div class="a" style="left:2087.5px;top:54px;width:28.5px;height:28px;background:#1e1e1e;"></div>
<svg class="a" style="left:2041px;top:56px;" width="28" height="26" viewBox="0 0 28 26" fill="none"><path d="M3.5 9 v13.5 h15" stroke="#d8d8d8" stroke-width="1.4" stroke-opacity=".65"/><path d="M6.5 6.5 v13 h15" stroke="#d8d8d8" stroke-width="1.4" stroke-opacity=".8"/><rect x="9.5" y="2.5" width="15.5" height="14.5" fill="#262626" stroke="#d8d8d8" stroke-width="1.6"/><path d="M10.5 16 L15.5 7 L18.5 12.5 L20.5 10.5 L24 16 Z" fill="#d8d8d8"/><circle cx="21.3" cy="6.3" r="1.5" fill="#d8d8d8"/></svg>
<svg class="a" style="left:2070.5px;top:62.5px;" width="13.0" height="13.0" viewBox="0 0 13.0 13.0" fill="none"><path d="M2 4.5 l4.5 4.0 l4.5 -4.0" stroke="#d0d0d0" stroke-width="2" stroke-linecap="round" stroke-linejoin="round"/></svg>
<div class="a" style="left:2087px;top:54px;width:29px;height:28px;overflow:hidden"><span class="t " style="left:12px;top:13.5px;font-size:19px;color:#d6d6d6;">ViewLayer</span></div>
<svg class="a" style="left:0px;top:90px;" width="10" height="10" viewBox="0 0 10 10" fill="none"><path d="M0 0 H10 A10 10 0 0 0 0 10 Z" fill="#191919"/></svg>
<svg class="a" style="left:1938px;top:90px;" width="10" height="10" viewBox="0 0 10 10" fill="none"><path d="M10 0 H0 A10 10 0 0 1 10 10 Z" fill="#191919"/></svg>
<svg class="a" style="left:0px;top:1058px;" width="10" height="10" viewBox="0 0 10 10" fill="none"><path d="M0 10 H10 A10 10 0 0 1 0 0 Z" fill="#191919"/></svg>
<svg class="a" style="left:1938px;top:1058px;" width="10" height="10" viewBox="0 0 10 10" fill="none"><path d="M10 10 H0 A10 10 0 0 0 10 0 Z" fill="#191919"/></svg>
<div class="a" style="left:0px;top:90px;width:1948px;height:42px;background:rgba(46,46,46,.86);border-radius:10px 10px 0 0;"></div>
<div class="a" style="left:0px;top:132px;width:175px;height:41px;background:rgba(50,50,50,.88);border-radius:0 0 8px 0;"></div>
<div class="a" style="left:1850px;top:132px;width:98px;height:41px;background:rgba(50,50,50,.88);border-radius:0 0 0 8px;"></div>
<div class="a" style="left:12px;top:96px;width:47px;height:28px;background:#2a2a2a;border-radius:5px;"></div>
<svg class="a" style="left:15px;top:97px;" width="30" height="26" viewBox="0 0 30 26" fill="none"><circle cx="14.5" cy="7.5" r="5" fill="#e6e6e6"/><circle cx="12.8" cy="5.8" r="1.6" fill="#2a2a2a" fill-opacity=".5"/><path d="M3 14.5 h22 M4.5 19.5 h20 M9 11 l-3 13 M20 11 l2.5 13" stroke="#dcdcdc" stroke-width="1.6" stroke-linecap="round"/></svg>
<svg class="a" style="left:43.5px;top:104.5px;" width="13.0" height="13.0" viewBox="0 0 13.0 13.0" fill="none"><path d="M2 4.5 l4.5 4.0 l4.5 -4.0" stroke="#d0d0d0" stroke-width="2" stroke-linecap="round" stroke-linejoin="round"/></svg>
<div class="a" style="left:72.5px;top:96px;width:173.5px;height:28px;background:#2a2a2a;border-radius:5px;"></div>
<svg class="a" style="left:76px;top:97.5px;" width="26" height="26" viewBox="0 0 26 26" fill="none"><path d="M2.5 8 V3.5 Q2.5 2.5 3.5 2.5 H8 M18 2.5 H22.5 Q23.5 2.5 23.5 3.5 V8 M23.5 18 V22.5 Q23.5 23.5 22.5 23.5 H18 M8 23.5 H3.5 Q2.5 23.5 2.5 22.5 V18" stroke="#e8e8e8" stroke-width="1.7"/><rect x="6.8" y="6.8" width="12.4" height="12.4" rx="1" fill="#e8e8e8"/></svg>
<span class="t " style="left:111px;top:111.6px;font-size:18px;color:#e0e0e0;">物体模式</span>
<svg class="a" style="left:229.5px;top:104.5px;" width="13.0" height="13.0" viewBox="0 0 13.0 13.0" fill="none"><path d="M2 4.5 l4.5 4.0 l4.5 -4.0" stroke="#d0d0d0" stroke-width="2" stroke-linecap="round" stroke-linejoin="round"/></svg>
<span class="t " style="left:267.5px;top:111.6px;font-size:17.6px;color:#e0e0e0;">视图</span>
<span class="t " style="left:327.7px;top:111.6px;font-size:17.6px;color:#e0e0e0;">选择</span>
<span class="t " style="left:387.9px;top:111.6px;font-size:17.6px;color:#e0e0e0;">添加</span>
<span class="t " style="left:448.1px;top:111.6px;font-size:17.6px;color:#e0e0e0;">物体</span>
<div class="a" style="left:769px;top:96px;width:125px;height:28px;background:#2a2a2a;border-radius:5px;"></div>
<svg class="a" style="left:773px;top:97px;" width="30" height="26" viewBox="0 0 30 26" fill="none"><path d="M7 21 V4 M7 21 H24 M7 21 L17 10" stroke="#dcdcdc" stroke-width="1.7" stroke-linecap="round"/><path d="M3.5 7 L7 2.5 L10.5 7 M20 17.5 L24.5 21 L20 24.5 M13.5 9.5 L18 9 L17.8 13.5" stroke="#dcdcdc" stroke-width="1.7" stroke-linecap="round" stroke-linejoin="round"/><circle cx="7" cy="21" r="2.6" fill="#2a2a2a" stroke="#dcdcdc" stroke-width="1.6"/></svg>
<span class="t " style="left:808.5px;top:111.6px;font-size:17.6px;color:#e0e0e0;">全局</span>
<svg class="a" style="left:877.5px;top:104.5px;" width="13.0" height="13.0" viewBox="0 0 13.0 13.0" fill="none"><path d="M2 4.5 l4.5 4.0 l4.5 -4.0" stroke="#d0d0d0" stroke-width="2" stroke-linecap="round" stroke-linejoin="round"/></svg>
<div class="a" style="left:908.5px;top:96px;width:45.5px;height:28px;background:#2a2a2a;border-radius:5px;"></div>
<svg class="a" style="left:911px;top:97px;" width="28" height="26" viewBox="0 0 28 26" fill="none"><circle cx="16" cy="9.5" r="6.3" stroke="#dcdcdc" stroke-width="1.8"/><circle cx="10" cy="17" r="6.3" stroke="#dcdcdc" stroke-width="1.8"/><circle cx="13" cy="13.2" r="2.3" fill="#fff"/></svg>
<svg class="a" style="left:938.5px;top:104.5px;" width="13.0" height="13.0" viewBox="0 0 13.0 13.0" fill="none"><path d="M2 4.5 l4.5 4.0 l4.5 -4.0" stroke="#d0d0d0" stroke-width="2" stroke-linecap="round" stroke-linejoin="round"/></svg>
<div class="a" style="left:967px;top:96px;width:29px;height:28px;background:#545454;border-radius:5px 0 0 5px;"></div>
<svg class="a" style="left:969px;top:98px;" width="26" height="24" viewBox="0 0 26 24" fill="none"><path d="M5 9 C5 2 19 1 19 9 C19 13 16 17 13 20 L9.5 17 C12 14.5 14.5 12 14.5 9.2 C14.5 6 9.5 6 9.5 9.2 L9 11.5 L4.6 11 Z" stroke="#9a9a9a" stroke-width="1.6" stroke-linejoin="round"/></svg>
<div class="a" style="left:996.5px;top:96px;width:50.5px;height:28px;background:#2a2a2a;border-radius:0 5px 5px 0;"></div>
<svg class="a" style="left:1000px;top:97px;" width="30" height="26" viewBox="0 0 30 26" fill="none"><path d="M3 18.5 H24 M3 14 V23 M10 15.5 V21.5 M17 15.5 V21.5 M24 12 V23" stroke="#dcdcdc" stroke-width="1.6"/><rect x="21" y="3" width="6" height="6" fill="#f0f0f0"/></svg>
<svg class="a" style="left:1030.5px;top:104.5px;" width="13.0" height="13.0" viewBox="0 0 13.0 13.0" fill="none"><path d="M2 4.5 l4.5 4.0 l4.5 -4.0" stroke="#d0d0d0" stroke-width="2" stroke-linecap="round" stroke-linejoin="round"/></svg>
<div class="a" style="left:1059.5px;top:96px;width:29.5px;height:28px;background:#545454;border-radius:5px 0 0 5px;"></div>
<svg class="a" style="left:1062px;top:98px;" width="24" height="24" viewBox="0 0 24 24" fill="none"><circle cx="12" cy="12" r="8.5" stroke="#8c8c8c" stroke-width="1.6"/><circle cx="12" cy="12" r="3" fill="#e6e6e6"/></svg>
<div class="a" style="left:1089.5px;top:96px;width:49.5px;height:28px;background:#2a2a2a;border-radius:0 5px 5px 0;"></div>
<svg class="a" style="left:1092px;top:98px;" width="30" height="24" viewBox="0 0 30 24" fill="none"><path d="M3 21 C10 21 10 4 14 4 C18 4 18 21 25 21" stroke="#9a9a9a" stroke-width="1.7" stroke-linecap="round"/></svg>
<svg class="a" style="left:1124px;top:105px;" width="12" height="12" viewBox="0 0 12 12" fill="none"><path d="M2 4.0 l4 3.5 l4 -3.5" stroke="#4c4c4c" stroke-width="2" stroke-linecap="round" stroke-linejoin="round"/></svg>
<div class="a" style="left:1534.5px;top:96px;width:47.5px;height:28px;background:#2a2a2a;border-radius:5px;"></div>
<svg class="a" style="left:1537px;top:97px;" width="30" height="26" viewBox="0 0 30 26" fill="none"><path d="M7 9.5 C11 3.5 21 3.5 25 9.5 C21 15.5 11 15.5 7 9.5 Z" fill="#e2e2e2"/><circle cx="16" cy="9.3" r="3.3" fill="#2a2a2a"/><circle cx="16" cy="9.3" r="1.5" fill="#e2e2e2"/><path d="M3.5 11.5 L13.5 16.5 L8.8 18.2 L7 23.5 Z" fill="#f0f0f0"/></svg>
<svg class="a" style="left:1566.5px;top:104.5px;" width="13.0" height="13.0" viewBox="0 0 13.0 13.0" fill="none"><path d="M2 4.5 l4.5 4.0 l4.5 -4.0" stroke="#d0d0d0" stroke-width="2" stroke-linecap="round" stroke-linejoin="round"/></svg>
<div class="a" style="left:1594px;top:96px;width:30px;height:28px;background:#4772b3;border-radius:5px 0 0 5px;"></div>
<svg class="a" style="left:1595px;top:97px;" width="28" height="26" viewBox="0 0 28 26" fill="none"><path d="M5 22 C17 20 23 13 24.5 3" stroke="#fff" stroke-width="1.7" stroke-linecap="round"/><path d="M7.5 19.5 L19 8 M14 7.5 L19.5 7.5 L19.5 13" stroke="#fff" stroke-width="1.7" stroke-linecap="round" stroke-linejoin="round"/><circle cx="6.5" cy="20.5" r="2.6" fill="#4772b3" stroke="#fff" stroke-width="1.6"/></svg>
<div class="a" style="left:1624.5px;top:96px;width:31.5px;height:28px;background:#2a2a2a;border-radius:0 5px 5px 0;"></div>
<svg class="a" style="left:1633.5px;top:104.5px;" width="13.0" height="13.0" viewBox="0 0 13.0 13.0" fill="none"><path d="M2 4.5 l4.5 4.0 l4.5 -4.0" stroke="#d0d0d0" stroke-width="2" stroke-linecap="round" stroke-linejoin="round"/></svg>
<div class="a" style="left:1666.5px;top:96px;width:30.0px;height:28px;background:#4772b3;border-radius:5px 0 0 5px;"></div>
<svg class="a" style="left:1668px;top:97px;" width="28" height="26" viewBox="0 0 28 26" fill="none"><circle cx="16.5" cy="10" r="7.6" fill="#fff"/><circle cx="11" cy="15.5" r="7" fill="#4772b3" stroke="#fff" stroke-width="1.7"/><path d="M11 9 A7 7 0 0 1 17.6 14 A7.6 7.6 0 0 1 11 9Z" fill="#c9d6ec"/></svg>
<div class="a" style="left:1697px;top:96px;width:30.5px;height:28px;background:#2a2a2a;border-radius:0 5px 5px 0;"></div>
<svg class="a" style="left:1705.5px;top:104.5px;" width="13.0" height="13.0" viewBox="0 0 13.0 13.0" fill="none"><path d="M2 4.5 l4.5 4.0 l4.5 -4.0" stroke="#d0d0d0" stroke-width="2" stroke-linecap="round" stroke-linejoin="round"/></svg>
<div class="a" style="left:1741px;top:96px;width:27px;height:28px;background:#545454;border-radius:5px;"></div>
<svg class="a" style="left:1742px;top:98px;" width="26" height="24" viewBox="0 0 26 24" fill="none"><path d="M8 6.5 V3 H23 V17.5 H19.5" stroke="#d8d8d8" stroke-width="1.6"/><rect x="3.5" y="7" width="15.5" height="14.5" stroke="#e2e2e2" stroke-width="1.7"/><path d="M8 10.5 V12 M8 15 V17 M11.5 17 H13.5 M16 17H17" stroke="#d8d8d8" stroke-width="1.4"/></svg>
<div class="a" style="left:1781.5px;top:96px;width:30.0px;height:28px;background:#545454;border-radius:5px 0 0 5px;"></div>
<svg class="a" style="left:1784px;top:98px;" width="24" height="24" viewBox="0 0 24 24" fill="none"><circle cx="12" cy="12" r="9.3" stroke="#c9c9c9" stroke-width="1.6"/><ellipse cx="12" cy="12" rx="4.4" ry="9.3" stroke="#c9c9c9" stroke-width="1.4"/><path d="M3 9 H21 M3 15 H21" stroke="#c9c9c9" stroke-width="1.4"/></svg>
<div class="a" style="left:1812px;top:96px;width:29px;height:28px;background:#4772b3;"></div>
<svg class="a" style="left:1814.5px;top:98px;" width="24" height="24" viewBox="0 0 24 24" fill="none"><circle cx="12" cy="12" r="10" fill="#fff"/></svg>
<div class="a" style="left:1841.5px;top:96px;width:29.5px;height:28px;background:#545454;"></div>
<svg class="a" style="left:1844px;top:98px;" width="24" height="24" viewBox="0 0 24 24" fill="none"><circle cx="12" cy="12" r="9.3" stroke="#cfcfcf" stroke-width="1.6"/><path d="M12 12 V2.7 A9.3 9.3 0 0 0 5 18.3 Z" fill="#cfcfcf"/><path d="M12 12 L19 18.5 A9.3 9.3 0 0 1 5 18.3Z" fill="#8e8e8e"/></svg>
<div class="a" style="left:1871.5px;top:96px;width:32.5px;height:28px;background:#545454;"></div>
<svg class="a" style="left:1875.5px;top:98px;" width="24" height="24" viewBox="0 0 24 24" fill="none"><circle cx="12" cy="12" r="9.3" stroke="#c4c4c4" stroke-width="1.6"/><circle cx="12" cy="12" r="6.4" stroke="#8a8a8a" stroke-width="1.5"/><path d="M6.5 10.5 A6 6 0 0 1 10.5 6.3" stroke="#d0d0d0" stroke-width="1.6" stroke-linecap="round"/></svg>
<div class="a" style="left:1904.5px;top:96px;width:29.5px;height:28px;background:#2a2a2a;border-radius:0 5px 5px 0;"></div>
<svg class="a" style="left:1912.5px;top:104.5px;" width="13.0" height="13.0" viewBox="0 0 13.0 13.0" fill="none"><path d="M2 4.5 l4.5 4.0 l4.5 -4.0" stroke="#d0d0d0" stroke-width="2" stroke-linecap="round" stroke-linejoin="round"/></svg>
<div class="a" style="left:1864.5px;top:139px;width:71.5px;height:27px;background:#2a2a2a;border-radius:5px;"></div>
<span class="t " style="left:1875px;top:153.9px;font-size:17.6px;color:#e0e0e0;">选项</span>
<svg class="a" style="left:1919.5px;top:146.5px;" width="13.0" height="13.0" viewBox="0 0 13.0 13.0" fill="none"><path d="M2 4.5 l4.5 4.0 l4.5 -4.0" stroke="#d0d0d0" stroke-width="2" stroke-linecap="round" stroke-linejoin="round"/></svg>
<div class="a" style="left:8.5px;top:136px;width:30.5px;height:32px;background:#4772b3;border-radius:5px 0 0 5px;"></div>
<svg class="a" style="left:8.5px;top:136px;" width="30.5" height="32" viewBox="0 0 30.5 32" fill="none"><rect x="5" y="6" width="20.5" height="20.5" stroke="#fff" stroke-width="2.2" stroke-dasharray="2.6 3.4" stroke-dashoffset="1.3"/></svg>
<div class="a" style="left:39.5px;top:136px;width:30.0px;height:32px;background:#505050;"></div>
<svg class="a" style="left:39.5px;top:136px;" width="30" height="32" viewBox="0 0 30 32" fill="none"><path d="M12 6 H26.5 V18.5 H20 V26 H5.5 V13 H12 Z" fill="#d6d6d6"/></svg>
<div class="a" style="left:70px;top:136px;width:30px;height:32px;background:#505050;"></div>
<svg class="a" style="left:70px;top:136px;" width="30" height="32" viewBox="0 0 30 32" fill="none"><path d="M11.5 5.5 H26 V20 H19 V13 H11.5 Z" fill="#d6d6d6"/><path d="M5 12.5 V26.5 H19" stroke="#d6d6d6" stroke-width="2" stroke-dasharray="2.4 3"/></svg>
<div class="a" style="left:100.5px;top:136px;width:30.5px;height:32px;background:#505050;"></div>
<svg class="a" style="left:100.5px;top:136px;" width="30.5" height="32" viewBox="0 0 30.5 32" fill="none"><path d="M11.5 5.5 H26.5 V19.5 H20 V26.5 H5.5 V12.5 H11.5 Z M12.5 12.5 V19.5 H19.5 V12.5Z" fill="#d6d6d6" fill-rule="evenodd"/></svg>
<div class="a" style="left:131.5px;top:136px;width:30.5px;height:32px;background:#505050;border-radius:0 5px 5px 0;"></div>
<svg class="a" style="left:131.5px;top:136px;" width="30.5" height="32" viewBox="0 0 30.5 32" fill="none"><rect x="5.5" y="6" width="20" height="20" stroke="#d6d6d6" stroke-width="2" stroke-dasharray="2.4 3.2"/><rect x="10.5" y="11" width="10" height="10" fill="#d6d6d6"/></svg>
<span class="t " style="left:100px;top:200.6px;font-size:17.6px;color:#f2f2f2;text-shadow:0 0 2px #222,0 1px 2px #222;font-weight:500">用户透视</span>
<span class="t" style="left:100px;top:229px;font-size:18.2px;color:#f2f2f2;letter-spacing:0.5px;text-shadow:0 0 2px #222,0 1px 2px #222;-webkit-text-stroke:.4px #f2f2f2">(1) Collection | Cube</span>
<div class="a" style="left:9.5px;top:188.5px;width:59.5px;height:52.8px;background:#4472bd;border-radius:6px 6px 0 0;"></div>
<div class="a" style="left:9.5px;top:244.4px;width:59.5px;height:52.8px;background:rgba(41,41,41,.96);border-radius:0 0 6px 6px;"></div>
<div class="a" style="left:9.5px;top:311px;width:59.5px;height:52.8px;background:rgba(41,41,41,.96);border-radius:6px 6px 0 0;"></div>
<div class="a" style="left:9.5px;top:367.2px;width:59.5px;height:52.8px;background:rgba(41,41,41,.96);"></div>
<div class="a" style="left:9.5px;top:423.4px;width:59.5px;height:52.8px;background:rgba(41,41,41,.96);"></div>
<div class="a" style="left:9.5px;top:479.6px;width:59.5px;height:52.8px;background:rgba(41,41,41,.96);border-radius:0 0 6px 6px;"></div>
<div class="a" style="left:9.5px;top:546.7px;width:59.5px;height:52.8px;background:rgba(41,41,41,.96);border-radius:6px 6px 0 0;"></div>
<div class="a" style="left:9.5px;top:602.9px;width:59.5px;height:52.8px;background:rgba(41,41,41,.96);border-radius:0 0 6px 6px;"></div>
<div class="a" style="left:9.5px;top:668px;width:59.5px;height:52.8px;background:rgba(41,41,41,.96);border-radius:6px;"></div>
<svg class="a" style="left:61.5px;top:233.8px;" width="4.5" height="4.5" viewBox="0 0 4.5 4.5" fill="none"><path d="M4.5 0 V4.5 H0 Z" fill="#a0a0a0"/></svg>
<svg class="a" style="left:61.5px;top:468.7px;" width="4.5" height="4.5" viewBox="0 0 4.5 4.5" fill="none"><path d="M4.5 0 V4.5 H0 Z" fill="#a0a0a0"/></svg>
<svg class="a" style="left:61.5px;top:592.0px;" width="4.5" height="4.5" viewBox="0 0 4.5 4.5" fill="none"><path d="M4.5 0 V4.5 H0 Z" fill="#a0a0a0"/></svg>
<svg class="a" style="left:61.5px;top:713.3px;" width="4.5" height="4.5" viewBox="0 0 4.5 4.5" fill="none"><path d="M4.5 0 V4.5 H0 Z" fill="#a0a0a0"/></svg>
<svg class="a" style="left:9.5px;top:188.5px" width="59.5" height="53" viewBox="9.5 188.5 59.5 53" fill="none"><rect x="22.2" y="197.2" width="36.6" height="34.2" rx="2.5" stroke="#e3c65e" stroke-width="1.9" stroke-dasharray="4.6 2.9"/><path d="M35 205.6 L35.6 223.4 L40.3 219.2 L48.2 216.4 Z" fill="#f4f4f4" stroke="#f4f4f4" stroke-width="1.2" stroke-linejoin="round"/></svg>
<svg class="a" style="left:9.5px;top:244.4px" width="59.5" height="53" viewBox="9.5 244.4 59.5 53" fill="none"><circle cx="40.2" cy="271.3" r="18.4" stroke="#f0f0f0" stroke-width="2.5"/><circle cx="40.2" cy="271.3" r="18.4" stroke="#a02538" stroke-width="2.5" stroke-dasharray="4.2 10.25" stroke-dashoffset="-5"/><path d="M40.2 260.2 V267 M40.2 275.6 V282.4 M29.1 271.3 H35.9 M44.5 271.3 H51.3" stroke="#b4b4b4" stroke-width="2.6"/></svg>
<svg class="a" style="left:19px;top:317.5px;" width="40" height="40" viewBox="0 0 40 40" fill="none"><path d="M20 5 V16 M20 24 V35 M5 20 H16 M24 20 H35" stroke="#ececec" stroke-width="2.2"/><path d="M20 1 L25 8.5 H15 Z M20 39 L25 31.5 H15 Z M1 20 L8.5 15 V25 Z M39 20 L31.5 15 V25 Z" fill="#ececec"/></svg>
<svg class="a" style="left:19px;top:373.7px;" width="40" height="40" viewBox="0 0 40 40" fill="none"><path d="M7.5 16 A13.5 13.5 0 0 1 32 14" stroke="#ececec" stroke-width="2.2"/><path d="M32.5 24 A13.5 13.5 0 0 1 8 26" stroke="#ececec" stroke-width="2.2"/><path d="M33.5 13 L39 22 H28 Z" fill="#ececec"/><path d="M6.5 27 L1 18 H12 Z" fill="#ececec"/><path d="M20 14.5 L25.5 20 L20 25.5 L14.5 20 Z" fill="#ececec"/></svg>
<svg class="a" style="left:19px;top:429.9px;" width="40" height="40" viewBox="0 0 40 40" fill="none"><rect x="5" y="18" width="17" height="17" fill="#ececec"/><path d="M8 14 V6 H34 V32 H26" stroke="#cfcfcf" stroke-width="1.8"/><path d="M24 16 L31 9 M25.5 8.5 H31.5 V14.5" stroke="#ececec" stroke-width="2" /></svg>
<svg class="a" style="left:19px;top:486.1px;" width="40" height="40" viewBox="0 0 40 40" fill="none"><circle cx="20" cy="20" r="15.5" stroke="#d4d4d4" stroke-width="2" stroke-dasharray="14.3 10" stroke-dashoffset="-5"/><rect x="12.5" y="12.5" width="15" height="15" fill="#ececec"/><path d="M20 1.5 L24 7 H16 Z M20 38.5 L24 33 H16 Z M1.5 20 L7 16 V24 Z M38.5 20 L33 16 V24 Z" fill="#ececec"/></svg>
<svg class="a" style="left:9.5px;top:546.7px" width="59.5" height="53" viewBox="9.5 546.7 59.5 53" fill="none"><path d="M21.2 580.6 L23 574.2 L42.6 555.4 L47.6 560.2 L28 579 Z" fill="#ececec"/><path d="M40.2 557.8 L45.2 562.6" stroke="#2a2a2a" stroke-width="1.3"/><path d="M22.5 582 C28 590.5 38 588.5 43 580 C48 572.5 56 573 61.5 583" stroke="#5fbf9c" stroke-width="2.2" stroke-linecap="round"/></svg>
<svg class="a" style="left:19px;top:609.4px;" width="40" height="40" viewBox="0 0 40 40" fill="none"><path d="M7 3 H12 V33 H37 V38 H7 Z" fill="#ececec"/><path d="M12.5 15 A18 18 0 0 1 31 33 H12.5 Z" fill="#7fe3bd"/><path d="M12 12 A21 21 0 0 1 34 33" stroke="#9aa" stroke-width="1.6"/><path d="M9 8 h3 M9 13 h3 M9 18 h3 M9 23 h3 M9 28 h3 M16 35.5 v-2.5 M21 35.5 v-2.5 M26 35.5 v-2.5 M31 35.5 v-2.5" stroke="#3a3a3a" stroke-width="1.4"/></svg>
<svg class="a" style="left:9.5px;top:668px" width="59.5" height="53" viewBox="9.5 668 59.5 53" fill="none"><path d="M25.4 673.6 V685.8 M19.3 679.7 H31.5" stroke="#6fd3ad" stroke-width="2.8"/><path d="M28 688.4 H51.4 V712 H28 Z M28 688.4 L36.4 680.8 H59 L51.4 688.4 M59 680.8 V704.4 L51.4 712" stroke="#79cdb0" stroke-width="1.7" stroke-linejoin="round"/></svg>
<svg class="a" style="left:1790px;top:180px" width="160" height="150" viewBox="1790 180 160 150" fill="none"><circle cx="1844.6" cy="233.9" r="10.6" fill="#5b4448" fill-opacity=".75" stroke="#b04a5a" stroke-width="2"/><circle cx="1819.8" cy="265.7" r="12.4" fill="#65802a" stroke="#8fc12e" stroke-width="2.2"/><circle cx="1868" cy="301.8" r="10.8" fill="#41546f" stroke="#3f7fd0" stroke-width="2"/><path d="M1866.8 254.9 L1865.8 207.3" stroke="#3b93f5" stroke-width="3.2"/><path d="M1866.8 254.9 L1915 244.7" stroke="#7fb81c" stroke-width="3.2"/><path d="M1866.8 254.9 L1887.7 275.8" stroke="#e8455a" stroke-width="3.2"/><circle cx="1865.8" cy="207.3" r="13.6" fill="#3b96ff"/><circle cx="1915" cy="244.7" r="12.4" fill="#80ba1e"/><circle cx="1887.7" cy="275.8" r="14.2" fill="#f73d57"/><text x="1865.8" y="213.4" text-anchor="middle" font-size="17" font-weight="bold" fill="#0b2a55" font-family="Liberation Sans,sans-serif">Z</text><text x="1915" y="250.6" text-anchor="middle" font-size="17" font-weight="bold" fill="#24360a" font-family="Liberation Sans,sans-serif">Y</text><text x="1887.7" y="281.9" text-anchor="middle" font-size="17" font-weight="bold" fill="#4d0a14" font-family="Liberation Sans,sans-serif">X</text></svg>
<svg class="a" style="left:1936px;top:200px;" width="12" height="18" viewBox="0 0 12 18" fill="none"><path d="M9.5 2.5 L3 9 L9.5 15.5" stroke="#bdbdbd" stroke-width="2.2" stroke-linecap="round" stroke-linejoin="round"/></svg>
<svg class="a" style="left:1880px;top:315px" width="68" height="205" viewBox="1880 315 68 205" fill="none"><circle cx="1912.5" cy="342.8" r="19.6" fill="#1c1c1c" fill-opacity=".36"/><circle cx="1912.5" cy="393.6" r="19.6" fill="#1c1c1c" fill-opacity=".36"/><circle cx="1912.5" cy="443" r="19.6" fill="#1c1c1c" fill-opacity=".36"/><circle cx="1912.5" cy="492" r="19.6" fill="#1c1c1c" fill-opacity=".36"/><circle cx="1915" cy="340.6" r="9.2" stroke="#f0f0f0" stroke-width="3"/><path d="M1908.3 347.6 L1900.8 355.6" stroke="#f0f0f0" stroke-width="3.8" stroke-linecap="round"/><path d="M1915 335.6 V345.6 M1910 340.6 H1920" stroke="#f0f0f0" stroke-width="2.2"/><g stroke="#f0f0f0" stroke-linecap="round" stroke-width="3.3"><path d="M1909.2 398 L1906.9 385"/><path d="M1913 396 L1913.4 382"/><path d="M1916.9 396.5 L1919.4 383.5"/><path d="M1920.2 399 L1924.3 389.8"/><path d="M1908 401.5 L1901 395.8" stroke-width="3.6"/></g><path d="M1905.5 397 L1921.8 396 Q1922.5 406.5 1913.6 406.2 Q1907.5 406 1904.4 399.5 Z" fill="#f0f0f0"/><circle cx="1905.4" cy="437.6" r="4.4" fill="#f0f0f0"/><circle cx="1915.8" cy="436" r="5.6" fill="#f0f0f0"/><circle cx="1905.4" cy="437.6" r="1.6" fill="#3a3a3a"/><circle cx="1915.8" cy="436" r="2.1" fill="#3a3a3a"/><rect x="1905.4" y="444.4" width="11.8" height="10.6" rx="1" fill="#f0f0f0"/><rect x="1902.6" y="447.4" width="3.4" height="4.6" fill="#f0f0f0"/><path d="M1918.8 450.6 L1925.8 447 V454.2 Z" fill="#f0f0f0"/><path d="M1905.6 481.8 H1920.4 L1926.4 501.6 H1899.4 Z M1910.4 481.8 L1908.2 501.6 M1915.4 481.8 L1917.6 501.6 M1903.8 488 H1922.2 M1901.8 494.4 H1924.2" stroke="#f0f0f0" stroke-width="2.3" stroke-linejoin="round"/></svg>
<div class="a" style="left:1953.5px;top:90px;width:162.5px;height:335.5px;background:#2a2a2a;border-radius:6px 0 0 6px;"></div>
<div class="a" style="left:1953.5px;top:90px;width:162.5px;height:42px;background:#2b2b2b;border-radius:6px 0 0 0;"></div>
<div class="a" style="left:1968px;top:96px;width:48.5px;height:28px;background:#262626;border-radius:5px;"></div>
<svg class="a" style="left:1971px;top:97px;" width="28" height="26" viewBox="0 0 28 26" fill="none"><rect x="3" y="3" width="8" height="4.6" fill="#dedede"/><rect x="14" y="11" width="11" height="4.6" fill="#dedede"/><rect x="14" y="19" width="11" height="4.6" fill="#dedede"/><path d="M6.5 8 V21.3 H13 M6.5 13.3 H13" stroke="#bdbdbd" stroke-width="1.4"/></svg>
<svg class="a" style="left:1999.5px;top:104.5px;" width="13.0" height="13.0" viewBox="0 0 13.0 13.0" fill="none"><path d="M2 4.5 l4.5 4.0 l4.5 -4.0" stroke="#d0d0d0" stroke-width="2" stroke-linecap="round" stroke-linejoin="round"/></svg>
<div class="a" style="left:2026.5px;top:96px;width:50.5px;height:28px;background:#262626;border-radius:5px;"></div>
<svg class="a" style="left:2029px;top:97.5px;" width="28" height="26" viewBox="0 0 28 26" fill="none"><path d="M3.5 9 v13.5 h15" stroke="#d8d8d8" stroke-width="1.4" stroke-opacity=".65"/><path d="M6.5 6.5 v13 h15" stroke="#d8d8d8" stroke-width="1.4" stroke-opacity=".8"/><rect x="9.5" y="2.5" width="15.5" height="14.5" fill="#262626" stroke="#d8d8d8" stroke-width="1.6"/><path d="M10.5 16 L15.5 7 L18.5 12.5 L20.5 10.5 L24 16 Z" fill="#d8d8d8"/><circle cx="21.3" cy="6.3" r="1.5" fill="#d8d8d8"/></svg>
<svg class="a" style="left:2060.5px;top:104.5px;" width="13.0" height="13.0" viewBox="0 0 13.0 13.0" fill="none"><path d="M2 4.5 l4.5 4.0 l4.5 -4.0" stroke="#d0d0d0" stroke-width="2" stroke-linecap="round" stroke-linejoin="round"/></svg>
<div class="a" style="left:2106px;top:96px;width:13px;height:28px;background:#262626;border-radius:5px 0 0 5px;"></div>
<svg class="a" style="left:2108px;top:110px;" width="8" height="10" viewBox="0 0 8 10" fill="none"><path d="M1 8 L5 3" stroke="#c8c8c8" stroke-width="2" stroke-linecap="round"/></svg>
<div class="a" style="left:1953.5px;top:230.5px;width:162.5px;height:32.0px;background:#34508c;"></div>
<div class="a" style="left:2000.5px;top:205px;width:1.3px;height:83px;background:#5a5a5a;"></div>
<svg class="a" style="left:1990.5px;top:139.5px;" width="24" height="24" viewBox="0 0 24 24" fill="none"><rect x="1.5" y="2" width="21" height="5.5" rx=".8" fill="#e6e6e6"/><path d="M3 9.5 H21 V22 H3 Z M9 12 V15 H15 V12 Z" fill="#e6e6e6" fill-rule="evenodd"/></svg>
<span class="t " style="left:2026px;top:152.6px;font-size:17.4px;color:#d2d2d2;">场景集合</span>
<svg class="a" style="left:1995px;top:177.5px;" width="12" height="12" viewBox="0 0 12 12" fill="none"><path d="M1.5 2.5 H10.5 L6 10.5 Z" fill="#c8c8c8"/></svg>
<div class="a" style="left:2018.5px;top:167.5px;width:32.0px;height:29.0px;background:#4c4c4c;border-radius:7px;border:1.6px solid #7a7a7a;"></div>
<svg class="a" style="left:2022.5px;top:170.5px;" width="24" height="24" viewBox="0 0 24 24" fill="none"><rect x="1.5" y="2" width="21" height="5.5" rx=".8" fill="#ececec"/><path d="M3 9.5 H21 V22 H3 Z M9 12 V15 H15 V12 Z" fill="#ececec" fill-rule="evenodd"/></svg>
<span class="t " style="left:2057px;top:183px;font-size:19px;color:#d2d2d2;">Collection</span>
<svg class="a" style="left:2028px;top:209px;" width="12" height="12" viewBox="0 0 12 12" fill="none"><path d="M2.5 1.5 V10.5 L10.5 6 Z" fill="#c8c8c8"/></svg>
<svg class="a" style="left:2052px;top:201px;" width="28" height="28" viewBox="0 0 28 28" fill="none"><circle cx="8" cy="8" r="5.2" fill="#e8913f"/><circle cx="18.5" cy="7.5" r="6.2" fill="#e8913f"/><circle cx="8" cy="8" r="1.8" fill="#2a2a2a"/><circle cx="18.5" cy="7.5" r="2.2" fill="#2a2a2a"/><rect x="4" y="14.5" width="17" height="10.5" rx="1.5" fill="#e8913f"/><path d="M22 19.5 L27.5 15.5 V24.5 Z" fill="#e8913f"/></svg>
<span class="t " style="left:2090px;top:215px;font-size:19px;color:#d2d2d2;">Camera</span>
<svg class="a" style="left:2028px;top:241.5px;" width="12" height="12" viewBox="0 0 12 12" fill="none"><path d="M2.5 1.5 V10.5 L10.5 6 Z" fill="#c8c8c8"/></svg>
<div class="a" style="left:2050px;top:232px;width:33px;height:29.5px;background:rgba(255,255,255,.14);border-radius:7px;border:1.5px solid rgba(255,255,255,.25);"></div>
<svg class="a" style="left:2054px;top:235px;" width="26" height="24" viewBox="0 0 26 24" fill="none"><path d="M3 3.5 H23 L13 21.5 Z" stroke="#e8913f" stroke-width="3.4" stroke-linejoin="round"/></svg>
<span class="t " style="left:2090px;top:247.5px;font-size:19px;color:#f0a050;">Cube</span>
<svg class="a" style="left:2028px;top:274px;" width="12" height="12" viewBox="0 0 12 12" fill="none"><path d="M2.5 1.5 V10.5 L10.5 6 Z" fill="#c8c8c8"/></svg>
<svg class="a" style="left:2054px;top:266px;" width="26" height="28" viewBox="0 0 26 28" fill="none"><path d="M13 2.5 A9 9 0 0 1 18.5 18.5 V20.5 H7.5 V18.5 A9 9 0 0 1 13 2.5 Z" fill="#e8913f"/><path d="M9 23 H17 M10.5 26 H15.5" stroke="#e8913f" stroke-width="2"/><path d="M9.5 11 L12 14 M16.5 11 L14 14 M10 16.5 H16" stroke="#2a2a2a" stroke-width="1.6"/></svg>
<span class="t " style="left:2090px;top:280px;font-size:19px;color:#d2d2d2;">Light</span>
<div class="a" style="left:1953.5px;top:431px;width:162.5px;height:721px;background:#303030;border-radius:6px 0 0 0;"></div>
<div class="a" style="left:1953.5px;top:471px;width:44.0px;height:681px;background:#1c1c1c;"></div>
<div class="a" style="left:1968.5px;top:437px;width:47.5px;height:26.5px;background:#262626;border-radius:5px;"></div>
<svg class="a" style="left:1974px;top:439px;" width="26" height="24" viewBox="0 0 26 24" fill="none"><rect x="1.5" y="2" width="22" height="8.5" rx="4.2" fill="#e4e4e4"/><rect x="1.5" y="13.5" width="22" height="8.5" rx="4.2" fill="#e4e4e4"/><rect x="12" y="3.8" width="9" height="5" rx="2.4" fill="#2a2a2a"/><path d="M17 15.2 h2.5 a2.5 2.5 0 0 1 0 5 h-2.5 z" fill="#2a2a2a"/></svg>
<svg class="a" style="left:1999.5px;top:445.5px;" width="13.0" height="13.0" viewBox="0 0 13.0 13.0" fill="none"><path d="M2 4.5 l4.5 4.0 l4.5 -4.0" stroke="#d0d0d0" stroke-width="2" stroke-linecap="round" stroke-linejoin="round"/></svg>
<div class="a" style="left:2064.5px;top:437px;width:54.5px;height:26.5px;background:#1e1e1e;border-radius:5px 0 0 5px;"></div>
<svg class="a" style="left:2066px;top:438px;" width="28" height="26" viewBox="0 0 28 26" fill="none"><circle cx="16.6" cy="8.8" r="7" stroke="#cfcfcf" stroke-width="1.8"/><path d="M11.8 14 L4.6 21.8" stroke="#cfcfcf" stroke-width="2" stroke-linecap="round"/></svg>
<div class="a" style="left:1956.5px;top:843px;width:41.0px;height:41.5px;background:#303030;border-radius:6px 0 0 6px;"></div>
<svg class="a" style="left:1964.0px;top:490.0px;" width="28" height="28" viewBox="0 0 28 28" fill="none"><path d="M7 3 V12" stroke="#c9c9c9" stroke-width="2"/><rect x="4" y="12.5" width="6" height="11" rx="2.6" fill="#c9c9c9"/><path d="M16.5 3 V8 Q16.5 11 19 11.5 V24 H22 V11.5 Q24.5 11 24.5 8 V3 H22.3 V8 H18.7 V3 Z" fill="#c9c9c9"/></svg>
<svg class="a" style="left:1964.0px;top:549.5px;" width="28" height="28" viewBox="0 0 28 28" fill="none"><rect x="3.5" y="8" width="21" height="15" rx="1.5" stroke="#c9c9c9" stroke-width="2"/><path d="M9 8 V4.5 H19 V8" stroke="#c9c9c9" stroke-width="2"/><rect x="19" y="11" width="3" height="2.4" fill="#c9c9c9"/><rect x="19" y="15" width="3" height="2.4" fill="#c9c9c9"/><rect x="19" y="19" width="3" height="2" fill="#c9c9c9"/><path d="M7 11 H16 V20 H7Z" stroke="#c9c9c9" stroke-width="1.3"/></svg>
<svg class="a" style="left:1964.0px;top:597.0px;" width="28" height="28" viewBox="0 0 28 28" fill="none"><path d="M4 4 H24 V12 H21 V9 H7 V12 H4 Z" fill="#c9c9c9"/><rect x="8" y="10.5" width="12" height="13" stroke="#c9c9c9" stroke-width="1.8"/><path d="M9.5 22 L13 16 L15.5 19.5 L17 18 L19 22 Z" fill="#c9c9c9"/></svg>
<svg class="a" style="left:1964.0px;top:642.0px;" width="28" height="28" viewBox="0 0 28 28" fill="none"><path d="M4 10 v13.5 h14" stroke="#c9c9c9" stroke-width="1.4" stroke-opacity=".7"/><path d="M7 7 v13.5 h14" stroke="#c9c9c9" stroke-width="1.4" stroke-opacity=".85"/><rect x="10" y="3" width="14.5" height="14" stroke="#c9c9c9" stroke-width="1.7"/><path d="M11 16 L15.5 8 L18.5 13 L20.5 11 L23.5 16 Z" fill="#c9c9c9"/><circle cx="21" cy="6.6" r="1.4" fill="#c9c9c9"/></svg>
<svg class="a" style="left:1964.0px;top:688.0px;" width="28" height="28" viewBox="0 0 28 28" fill="none"><path d="M9 4 L14.5 19 L3.5 19 Z" fill="#c9c9c9"/><circle cx="19.5" cy="6.5" r="2.8" fill="#c9c9c9"/><circle cx="18" cy="18.5" r="5.8" stroke="#c9c9c9" stroke-width="2"/><circle cx="16.5" cy="17" r="1.5" fill="#c9c9c9"/></svg>
<svg class="a" style="left:1964.0px;top:732.5px;" width="28" height="28" viewBox="0 0 28 28" fill="none"><circle cx="14" cy="14" r="10" stroke="#c4485a" stroke-width="2.2"/><path d="M8 8 Q12 6.5 13.5 9.5 Q12 13 14.5 15 Q13 19.5 10 22 Q5.5 18 5.5 14 Z M17 5.5 Q21.5 7.5 22.5 12 Q19 13 17.5 10 Z" fill="#c4485a"/><path d="M19.5 1.5 L25 3 L22 7.5" stroke="#c4485a" stroke-width="1.6" fill="none"/></svg>
<svg class="a" style="left:1964.0px;top:792.5px;" width="28" height="28" viewBox="0 0 28 28" fill="none"><rect x="3.5" y="3.5" width="21" height="5" stroke="#c9c9c9" stroke-width="1.8"/><path d="M5.5 9 V23.5 H22.5 V9" stroke="#c9c9c9" stroke-width="1.8"/><path d="M11 13.5 H17" stroke="#c9c9c9" stroke-width="2"/></svg>
<svg class="a" style="left:1964.0px;top:849.5px;" width="28" height="28" viewBox="0 0 28 28" fill="none"><path d="M3 8.5 V4 Q3 3 4 3 H8.5 M19.5 3 H24 Q25 3 25 4 V8.5 M25 19.5 V24 Q25 25 24 25 H19.5 M8.5 25 H4 Q3 25 3 24 V19.5" stroke="#e8913f" stroke-width="1.8"/><rect x="7.5" y="7.5" width="13" height="13" rx="1" fill="#f0994a"/></svg>
<svg class="a" style="left:1964.0px;top:895.5px;" width="28" height="28" viewBox="0 0 28 28" fill="none"><path d="M22.5 3.5 A6.3 6.3 0 0 0 14 11 L3.5 21.5 Q2.5 24 5 25 Q6.5 25.3 7.5 24.5 L18 14 A6.3 6.3 0 0 0 25 6.5 L21 10.5 L17.8 9.8 L17.3 7 Z" fill="#6a92e0"/></svg>
<svg class="a" style="left:1964.0px;top:941.0px;" width="28" height="28" viewBox="0 0 28 28" fill="none"><circle cx="7" cy="6.5" r="3.6" fill="#6a92e0"/><circle cx="22" cy="6.5" r="2" fill="#6a92e0"/><circle cx="7" cy="22" r="2" fill="#6a92e0"/><circle cx="22" cy="22" r="2.8" fill="#6a92e0"/><path d="M7 6.5 H22 M7 6.5 V22 M7 6.5 L22 22" stroke="#6a92e0" stroke-width="1.6"/></svg>
<svg class="a" style="left:1964.0px;top:986.5px;" width="28" height="28" viewBox="0 0 28 28" fill="none"><circle cx="13" cy="14.5" r="4.4" fill="#6a92e0"/><path d="M19 5.5 A9.6 9.6 0 1 0 23.3 17" stroke="#6a92e0" stroke-width="2" stroke-linecap="round"/><circle cx="22.5" cy="6" r="2.6" fill="#6a92e0"/></svg>
<svg class="a" style="left:1964.0px;top:1033.0px;" width="28" height="28" viewBox="0 0 28 28" fill="none"><path d="M4 17 Q3 11 9 9 L19 3.5 Q25 2.5 25 8.5 L23 17 Q21 24 14 24.5 L9 24.5 Q4.5 23 4 17 Z" stroke="#6a92e0" stroke-width="2"/><circle cx="12" cy="16.5" r="4.6" stroke="#6a92e0" stroke-width="2"/><circle cx="12" cy="16.5" r="1.5" fill="#6a92e0"/></svg>
<svg class="a" style="left:1964.0px;top:1076.0px;" width="28" height="28" viewBox="0 0 28 28" fill="none"><path d="M6 6 H22 L14 23 Z" stroke="#19c98a" stroke-width="2"/><rect x="2.5" y="2.5" width="6.5" height="6.5" rx="1.2" fill="#1c1c1c" stroke="#19c98a" stroke-width="1.8"/><rect x="19" y="2.5" width="6.5" height="6.5" rx="1.2" fill="#1c1c1c" stroke="#19c98a" stroke-width="1.8"/><rect x="10.8" y="19.5" width="6.5" height="6.5" rx="1.2" fill="#1c1c1c" stroke="#19c98a" stroke-width="1.8"/></svg>
<svg class="a" style="left:1964.0px;top:1122.5px;" width="28" height="28" viewBox="0 0 28 28" fill="none"><circle cx="14" cy="14" r="9.6" fill="#cf5c66"/><path d="M14 14 L14 3.5 A9.6 9.6 0 0 1 23.5 9.5 Z" fill="#1c1c1c" fill-opacity=".55"/><path d="M14 14 L5 20 A9.6 9.6 0 0 0 14 24.5 Z" fill="#1c1c1c" fill-opacity=".5"/><path d="M14 14 L24.4 15.5 A9.6 9.6 0 0 1 18 23.7Z" fill="#fff" fill-opacity=".25"/></svg>
<svg class="a" style="left:2016px;top:488px;" width="26" height="26" viewBox="0 0 26 26" fill="none"><path d="M2.5 8 V3.5 Q2.5 2.5 3.5 2.5 H8 M18 2.5 H22.5 Q23.5 2.5 23.5 3.5 V8 M23.5 18 V22.5 Q23.5 23.5 22.5 23.5 H18 M8 23.5 H3.5 Q2.5 23.5 2.5 22.5 V18" stroke="#e0e0e0" stroke-width="1.7"/><rect x="6.8" y="6.8" width="12.4" height="12.4" rx="1" fill="#e0e0e0"/></svg>
<span class="t" style="left:2054.4px;top:500.5px;font-size:19px;color:#d2d2d2;letter-spacing:-0.56px;">Cube</span>
<div class="a" style="left:2014px;top:544.5px;width:50px;height:28.0px;background:#282828;border-radius:5px 0 0 5px;"></div>
<div class="a" style="left:2064.5px;top:544.5px;width:54.5px;height:28.0px;background:#1d1d1d;"></div>
<svg class="a" style="left:2018px;top:546.5px;" width="24" height="24" viewBox="0 0 26 26" fill="none"><path d="M2.5 8 V3.5 Q2.5 2.5 3.5 2.5 H8 M18 2.5 H22.5 Q23.5 2.5 23.5 3.5 V8 M23.5 18 V22.5 Q23.5 23.5 22.5 23.5 H18 M8 23.5 H3.5 Q2.5 23.5 2.5 22.5 V18" stroke="#e0e0e0" stroke-width="1.7"/><rect x="6.8" y="6.8" width="12.4" height="12.4" rx="1" fill="#e0e0e0"/></svg>
<svg class="a" style="left:2046.5px;top:553.0px;" width="13.0" height="13.0" viewBox="0 0 13.0 13.0" fill="none"><path d="M2 4.5 l4.5 4.0 l4.5 -4.0" stroke="#d0d0d0" stroke-width="2" stroke-linecap="round" stroke-linejoin="round"/></svg>
<span class="t " style="left:2075px;top:558.5px;font-size:19px;color:#d2d2d2;">Cube</span>
<div class="a" style="left:2011px;top:591.5px;width:108px;height:455.5px;background:#3a3a3a;border-radius:6px 0 0 6px;"></div>
<svg class="a" style="left:2023.5px;top:603.5px;" width="16" height="16" viewBox="0 0 16 16" fill="none"><path d="M2 6.0 l6 5.5 l6 -5.5" stroke="#cfcfcf" stroke-width="1.8" stroke-linecap="round" stroke-linejoin="round"/></svg>
<span class="t " style="left:2047px;top:612.6px;font-size:17.6px;color:#d2d2d2;">变换</span>
<span class="t " style="left:2077px;top:661.6px;font-size:17.6px;color:#d2d2d2;">位置</span>
<span class="t " style="left:2077px;top:767.6px;font-size:17.6px;color:#d2d2d2;">旋转</span>
<span class="t " style="left:2092px;top:873.1px;font-size:17.6px;color:#d2d2d2;">模式</span>
<span class="t " style="left:2077px;top:914.1px;font-size:17.6px;color:#d2d2d2;">缩放</span>
<svg class="a" style="left:2048px;top:1018px;" width="12" height="18" viewBox="0 0 12 18" fill="none"><path d="M3 2.5 L9.5 9 L3 15.5" stroke="#cfcfcf" stroke-width="1.8" stroke-linecap="round" stroke-linejoin="round"/></svg>
<span class="t " style="left:2069px;top:1028.6px;font-size:17.6px;color:#d2d2d2;">变换增量</span>
<div class="a" style="left:2011px;top:1051.5px;width:108px;height:38.5px;background:#3a3a3a;border-radius:6px 0 0 6px;"></div>
<svg class="a" style="left:2026px;top:1062px;" width="12" height="18" viewBox="0 0 12 18" fill="none"><path d="M3 2.5 L9.5 9 L3 15.5" stroke="#cfcfcf" stroke-width="1.8" stroke-linecap="round" stroke-linejoin="round"/></svg>
<span class="t " style="left:2047px;top:1072.6px;font-size:17.6px;color:#d2d2d2;">关系</span>
<div class="a" style="left:2011px;top:1094.5px;width:108px;height:38.0px;background:#3a3a3a;border-radius:6px 0 0 6px;"></div>
<svg class="a" style="left:2026px;top:1105px;" width="12" height="18" viewBox="0 0 12 18" fill="none"><path d="M3 2.5 L9.5 9 L3 15.5" stroke="#cfcfcf" stroke-width="1.8" stroke-linecap="round" stroke-linejoin="round"/></svg>
<span class="t " style="left:2047px;top:1115.6px;font-size:17.6px;color:#d2d2d2;">集合</span>
<div class="a" style="left:2011px;top:1137px;width:108px;height:15px;background:#3a3a3a;border-radius:6px 0 0 0;"></div>
<div class="a" style="left:2011px;top:1137px;width:105px;height:15px;overflow:hidden"><span class="t " style="left:36px;top:21.1px;font-size:17.6px;color:#d2d2d2;">实例化</span></div>
<div class="a" style="left:0px;top:1075px;width:1948px;height:77px;background:#1e1e1e;border-radius:10px 10px 0 0;"></div>
<div class="a" style="left:0px;top:1075px;width:1948px;height:39px;background:#2d2d2d;border-radius:10px 10px 0 0;"></div>
<div class="a" style="left:10px;top:1081px;width:48px;height:28px;background:#262626;border-radius:5px;"></div>
<svg class="a" style="left:15px;top:1083px;" width="26" height="24" viewBox="0 0 26 24" fill="none"><circle cx="12" cy="12" r="10.5" fill="#e4e4e4"/><path d="M13 5.5 L9.5 13 L15.5 19" stroke="#262626" stroke-width="2.6" stroke-linecap="round" stroke-linejoin="round"/></svg>
<svg class="a" style="left:41.5px;top:1089.5px;" width="13.0" height="13.0" viewBox="0 0 13.0 13.0" fill="none"><path d="M2 4.5 l4.5 4.0 l4.5 -4.0" stroke="#d0d0d0" stroke-width="2" stroke-linecap="round" stroke-linejoin="round"/></svg>
<div class="a" style="left:70px;top:1081px;width:72.5px;height:28px;background:#262626;border-radius:5px 0 0 5px;"></div>
<span class="t " style="left:80.5px;top:1096.1px;font-size:17.6px;color:#dadada;">回放</span>
<svg class="a" style="left:125.0px;top:1089.5px;" width="13.0" height="13.0" viewBox="0 0 13.0 13.0" fill="none"><path d="M2 4.5 l4.5 4.0 l4.5 -4.0" stroke="#d0d0d0" stroke-width="2" stroke-linecap="round" stroke-linejoin="round"/></svg>
<div class="a" style="left:143px;top:1081px;width:123.5px;height:28px;background:#262626;border-radius:0 5px 5px 0;"></div>
<span class="t" style="left:154.5px;top:1096.1px;font-size:17.6px;color:#dadada;letter-spacing:0.65px;">抠像(插帧)</span>
<svg class="a" style="left:250.5px;top:1089.5px;" width="13.0" height="13.0" viewBox="0 0 13.0 13.0" fill="none"><path d="M2 4.5 l4.5 4.0 l4.5 -4.0" stroke="#d0d0d0" stroke-width="2" stroke-linecap="round" stroke-linejoin="round"/></svg>
<span class="t " style="left:284px;top:1096.1px;font-size:17.6px;color:#dadada;">视图</span>
<span class="t " style="left:344px;top:1096.1px;font-size:17.6px;color:#dadada;">标记</span>
<div class="a" style="left:821.5px;top:1081px;width:30.0px;height:28px;background:#565656;border-radius:5px 0 0 5px;"></div>
<svg class="a" style="left:828px;top:1087px;" width="16" height="16" viewBox="0 0 16 16" fill="none"><circle cx="8" cy="8" r="5.8" fill="#f0f0f0"/></svg>
<div class="a" style="left:852px;top:1081px;width:28px;height:28px;background:#262626;border-radius:0 5px 5px 0;"></div>
<svg class="a" style="left:861.0px;top:1090.5px;" width="11.0" height="11.0" viewBox="0 0 11.0 11.0" fill="none"><path d="M2 3.5 l3.5 3.0 l3.5 -3.0" stroke="#555" stroke-width="1.6" stroke-linecap="round" stroke-linejoin="round"/></svg>
<div class="a" style="left:894.5px;top:1081px;width:31.2px;height:28px;background:#565656;border-radius:5px 0 0 5px;"></div>
<div class="a" style="left:926.5px;top:1081px;width:31.2px;height:28px;background:#565656;border-radius:0;"></div>
<div class="a" style="left:958.5px;top:1081px;width:31.7px;height:28px;background:#565656;border-radius:0;"></div>
<div class="a" style="left:991px;top:1081px;width:31.2px;height:28px;background:#565656;border-radius:0;"></div>
<div class="a" style="left:1023px;top:1081px;width:31.7px;height:28px;background:#565656;border-radius:0;"></div>
<div class="a" style="left:1055.5px;top:1081px;width:31.2px;height:28px;background:#565656;border-radius:0 5px 5px 0;"></div>
<svg class="a" style="left:897.5px;top:1083px;" width="26" height="24" viewBox="0 0 26 24" fill="none"><path d="M7 5 V19" stroke="#f2f2f2" stroke-width="2.6"/><path d="M19.5 5 V19 L9.5 12 Z" fill="#f2f2f2"/></svg>
<svg class="a" style="left:929.5px;top:1083px;" width="26" height="24" viewBox="0 0 26 24" fill="none"><path d="M9 5.5 L14.5 12 L9 18.5 L3.5 12 Z" fill="#f2f2f2"/><path d="M24 5.5 V18.5 L15.5 12 Z" fill="#f2f2f2"/></svg>
<svg class="a" style="left:961.75px;top:1083px;" width="26" height="24" viewBox="0 0 26 24" fill="none"><path d="M20 3.5 V20.5 L5.5 12 Z" fill="#f2f2f2"/></svg>
<svg class="a" style="left:994.0px;top:1083px;" width="26" height="24" viewBox="0 0 26 24" fill="none"><path d="M6 3.5 V20.5 L20.5 12 Z" fill="#f2f2f2"/></svg>
<svg class="a" style="left:1026.25px;top:1083px;" width="26" height="24" viewBox="0 0 26 24" fill="none"><path d="M17 5.5 L22.5 12 L17 18.5 L11.5 12 Z" fill="#f2f2f2"/><path d="M2 5.5 V18.5 L10.5 12 Z" fill="#f2f2f2"/></svg>
<svg class="a" style="left:1058.5px;top:1083px;" width="26" height="24" viewBox="0 0 26 24" fill="none"><path d="M19 5 V19" stroke="#f2f2f2" stroke-width="2.6"/><path d="M6.5 5 V19 L16.5 12 Z" fill="#f2f2f2"/></svg>
<div class="a" style="left:1478px;top:1081px;width:120px;height:28px;background:#565656;border-radius:5px;"></div>
<span class="t " style="left:1532px;top:1095px;font-size:18.5px;color:#dadada;">1</span>
<div class="a" style="left:1607.5px;top:1081px;width:31.0px;height:28px;background:#565656;border-radius:5px 0 0 5px;"></div>
<svg class="a" style="left:1611px;top:1083px;" width="26" height="24" viewBox="0 0 26 24" fill="none"><circle cx="12.5" cy="13.5" r="8" stroke="#e6e6e6" stroke-width="1.8"/><path d="M12.5 9 V13.5 H16.5" stroke="#e6e6e6" stroke-width="1.7"/><path d="M10 3 H15 M12.5 3 V5.5 M19 6 L20.5 7.5" stroke="#e6e6e6" stroke-width="1.8"/></svg>
<div class="a" style="left:1639.5px;top:1081px;width:140.0px;height:28px;background:#565656;"></div>
<span class="t " style="left:1664px;top:1096.1px;font-size:17.6px;color:#dadada;">起始</span>
<span class="t " style="left:1747px;top:1095px;font-size:18.5px;color:#dadada;">1</span>
<div class="a" style="left:1780.5px;top:1081px;width:155.5px;height:28px;background:#565656;border-radius:0 5px 5px 0;"></div>
<span class="t " style="left:1804.5px;top:1096.1px;font-size:17.6px;color:#dadada;">结束点</span>
<span class="t " style="left:1881px;top:1095px;font-size:18.5px;color:#dadada;">250</span>
<span class="t" style="left:206.0px;top:1135.5px;font-size:17.5px;color:#a9a9a9;transform:translate(-50%,-50%)">20</span>
<span class="t" style="left:351.1px;top:1135.5px;font-size:17.5px;color:#a9a9a9;transform:translate(-50%,-50%)">40</span>
<span class="t" style="left:496.2px;top:1135.5px;font-size:17.5px;color:#a9a9a9;transform:translate(-50%,-50%)">60</span>
<span class="t" style="left:641.3px;top:1135.5px;font-size:17.5px;color:#a9a9a9;transform:translate(-50%,-50%)">80</span>
<span class="t" style="left:786.4px;top:1135.5px;font-size:17.5px;color:#a9a9a9;transform:translate(-50%,-50%)">100</span>
<span class="t" style="left:931.5px;top:1135.5px;font-size:17.5px;color:#a9a9a9;transform:translate(-50%,-50%)">120</span>
<span class="t" style="left:1076.6px;top:1135.5px;font-size:17.5px;color:#a9a9a9;transform:translate(-50%,-50%)">140</span>
<span class="t" style="left:1221.7px;top:1135.5px;font-size:17.5px;color:#a9a9a9;transform:translate(-50%,-50%)">160</span>
<span class="t" style="left:1366.8px;top:1135.5px;font-size:17.5px;color:#a9a9a9;transform:translate(-50%,-50%)">180</span>
<span class="t" style="left:1511.9px;top:1135.5px;font-size:17.5px;color:#a9a9a9;transform:translate(-50%,-50%)">200</span>
<span class="t" style="left:1657.0px;top:1135.5px;font-size:17.5px;color:#a9a9a9;transform:translate(-50%,-50%)">220</span>
<span class="t" style="left:1802.1px;top:1135.5px;font-size:17.5px;color:#a9a9a9;transform:translate(-50%,-50%)">240</span>
<div class="a" style="left:47.5px;top:1119px;width:39.5px;height:29px;background:#4478c2;border-radius:5px 5px 0 0;"></div>
<div class="a" style="left:66px;top:1119.5px;width:2px;height:32.5px;background:#4478c2;"></div>
<span class="t" style="left:67px;top:1135.5px;font-size:17.5px;color:#fff;transform:translate(-50%,-50%)">1</span>
<div class="a" style="left:10px;top:1135.5px;width:1926px;height:12.3px;background:#5c5c5c;border-radius:6px;"></div>
<svg class="a" style="left:11px;top:1136.5px;" width="11" height="11" viewBox="0 0 11 11" fill="none"><circle cx="5.5" cy="5.5" r="3.6" fill="#262626"/></svg>
<svg class="a" style="left:1923px;top:1136.5px;" width="11" height="11" viewBox="0 0 11 11" fill="none"><circle cx="5.5" cy="5.5" r="3.6" fill="#262626"/></svg>
<svg class="a" style="left:1938px;top:1132px;" width="10" height="20" viewBox="0 0 10 20" fill="none"><path d="M3 3 L6.5 6 L4 9.5 L6.5 13" stroke="#9a9a9a" stroke-width="1.6"/></svg>
<div class="a" style="left:0px;top:1152px;width:2116px;height:30px;background:#181818;"></div>
<svg class="a" style="left:11px;top:1155px;" width="22" height="27" viewBox="0 0 22 27" fill="none"><rect x="3" y="2.5" width="16.5" height="23" rx="6.5" stroke="#939393" stroke-width="1.8"/><path d="M3.5 11 V9 A6.5 6.5 0 0 1 10 2.5 H10.5 V11 Z" fill="#e8e8e8"/></svg>
<span class="t " style="left:50px;top:1169.6px;font-size:17.6px;color:#939393;">选择</span>
<svg class="a" style="left:355px;top:1155px;" width="22" height="27" viewBox="0 0 22 27" fill="none"><rect x="3" y="2.5" width="16.5" height="23" rx="6.5" stroke="#939393" stroke-width="1.8"/><rect x="9" y="5.5" width="4" height="8" rx="2" fill="#e8e8e8"/></svg>
<span class="t " style="left:393px;top:1169.6px;font-size:17.6px;color:#939393;">旋转视图</span>
<svg class="a" style="left:698px;top:1155px;" width="22" height="27" viewBox="0 0 22 27" fill="none"><rect x="3" y="2.5" width="16.5" height="23" rx="6.5" stroke="#939393" stroke-width="1.8"/><path d="M18.5 11 V9 A6.5 6.5 0 0 0 12 2.5 H11.5 V11 Z" fill="#e8e8e8"/></svg>
<span class="t " style="left:736px;top:1169.6px;font-size:17.6px;color:#939393;">物体</span>
<span class="t" style="left:1655px;top:1151.6px;font-size:33.5px;color:rgba(190,190,190,.62);letter-spacing:0.58px;font-weight:300;-webkit-text-stroke:0">激活 Windows</span>
<span class="t " style="left:1656px;top:1189.6px;font-size:22px;color:rgba(190,190,190,.62);font-weight:300;-webkit-text-stroke:0">转到“设置”以激活 Windows。</span>
<div class="a" style="left:2116px;top:0;width:3px;height:1182px;background:#1b1b1b"></div>
</div>
</body></html>
